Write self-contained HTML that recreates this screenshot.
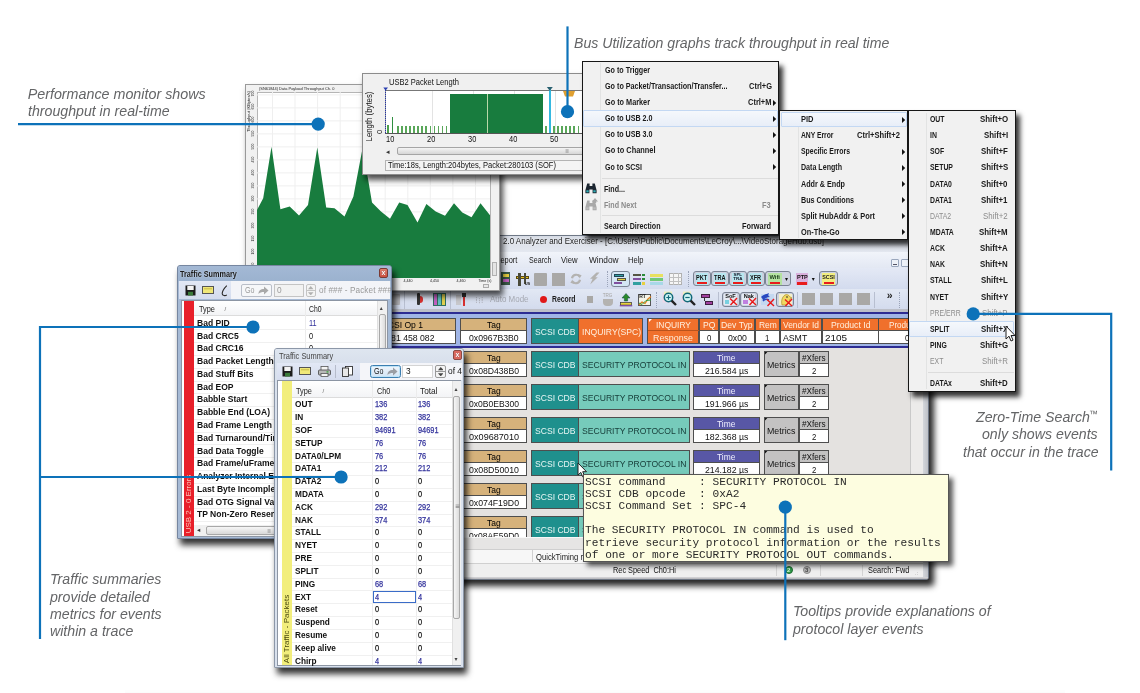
<!DOCTYPE html>
<html lang="en"><head><meta charset="utf-8"><title>USB Protocol Suite</title>
<style>
html,body{margin:0;padding:0}
body{width:1140px;height:693px;background:#fff;position:relative;overflow:hidden;font-family:"Liberation Sans",sans-serif}
div,span.t,svg{position:absolute;box-sizing:border-box}
span.t{white-space:pre;transform-origin:0 50%}
#root{left:0;top:0;width:1140px;height:693px;will-change:transform}
</style></head>
<body>
<div id="root">
<div style="left:125.0px;top:689.0px;width:940.0px;height:4.0px;background:linear-gradient(rgba(0,0,0,0),rgba(0,0,0,.016))"></div>
<div style="left:300.0px;top:235.0px;width:628.5px;height:345.0px;background:#dadee6;border:1px solid #6f7886;border-radius:3px;box-shadow:5px 6px 6px rgba(0,0,0,.85);overflow:hidden">
<div style="left:-1.0px;top:-1.0px;width:628.5px;height:16.5px;background:linear-gradient(#d6dbe4,#e4e8f0)"></div>
<span class="t" style="font:normal normal 8.80px/11px 'Liberation Sans',sans-serif;color:#222;left:201.5px;top:-0.2px;transform:scaleX(0.907);text-shadow:0 0 3px #fff;">2.0 Analyzer and Exerciser - [C:\Users\Public\Documents\LeCroy\...\VideoStorageHub.usb]</span>
<div style="left:5.0px;top:15.5px;width:616.5px;height:16.9px;background:linear-gradient(#f1f4fa,#e3e8f3)"></div>
<span class="t" style="font:normal normal 8.80px/11px 'Liberation Sans',sans-serif;color:#1a1a1a;left:194.1px;top:18.8px;transform:scaleX(0.848);">Report</span>
<span class="t" style="font:normal normal 8.80px/11px 'Liberation Sans',sans-serif;color:#1a1a1a;left:227.6px;top:18.8px;transform:scaleX(0.807);">Search</span>
<span class="t" style="font:normal normal 8.80px/11px 'Liberation Sans',sans-serif;color:#1a1a1a;left:260.0px;top:18.8px;transform:scaleX(0.873);">View</span>
<span class="t" style="font:normal normal 8.80px/11px 'Liberation Sans',sans-serif;color:#1a1a1a;left:287.5px;top:18.8px;transform:scaleX(0.943);">Window</span>
<span class="t" style="font:normal normal 8.80px/11px 'Liberation Sans',sans-serif;color:#1a1a1a;left:327.0px;top:18.8px;transform:scaleX(0.857);">Help</span>
<div style="left:590.0px;top:23.0px;width:8.0px;height:8.0px;background:#eef2f8;border:1px solid #9aa7bd;border-radius:1px"></div>
<div style="left:592.0px;top:28.0px;width:4.0px;height:1.2px;background:#556"></div>
<div style="left:600.0px;top:23.0px;width:8.0px;height:8.0px;background:#eef2f8;border:1px solid #9aa7bd;border-radius:1px"></div>
<div style="left:5.0px;top:32.4px;width:616.5px;height:20.6px;background:linear-gradient(#e4e9f5,#d3dbee)"></div>
<div style="left:5.0px;top:53.0px;width:616.5px;height:22.5px;background:linear-gradient(#e2e8f4,#d1d9ec)"></div>
<div style="left:200.0px;top:36.0px;width:9.0px;height:13.0px;background:#3a5a48"></div>
<div style="left:202.0px;top:38.0px;width:6.0px;height:3.0px;background:#e8d040"></div>
<div style="left:202.0px;top:43.0px;width:6.0px;height:3.0px;background:#c060c0"></div>
<div style="left:214.5px;top:39.5px;width:13.0px;height:3.5px;background:#e8c020;border:1px solid #5a4a10"></div>
<div style="left:216.5px;top:36.5px;width:3.0px;height:13.5px;background:#4a4a3a"></div>
<div style="left:222.5px;top:36.5px;width:2.5px;height:11.5px;background:#4a4a3a"></div>
<span class="t" style="font:normal bold 4.00px/5px 'Liberation Sans',sans-serif;color:#222;left:223.7px;top:45.0px;">US</span>
<div style="left:232.5px;top:37.0px;width:13.5px;height:12.5px;background:#a9a8a6;border-radius:1px"></div>
<div style="left:250.5px;top:37.0px;width:13.0px;height:12.5px;background:#a9a8a6"></div>
<svg style="left:269.0px;top:36.5px" width="12" height="12" viewBox="0 0 12 12"><path d="M2 5.2A4.2 4.2 0 0 1 9.6 3.6M10 6.8A4.2 4.2 0 0 1 2.4 8.4" fill="none" stroke="#b3b2b0" stroke-width="2.2"/><polygon points="8,1 11.6,2.2 9.6,5.4" fill="#b3b2b0"/><polygon points="4,11 0.4,9.8 2.4,6.6" fill="#b3b2b0"/></svg>
<svg style="left:288.0px;top:36.0px" width="11" height="13" viewBox="0 0 11 13"><polygon points="7.5,0.5 10.5,0.5 6.3,5.3 8.8,5.3 1.2,12.5 3.6,6.8 1,6.8" fill="#b3b2b0"/></svg>
<div style="left:305.7px;top:35.0px;width:1.6px;height:16.0px;border-left:1.6px dotted #9aa3b8"></div>
<div style="left:309.5px;top:35.0px;width:19.0px;height:16.0px;background:#d4e6f4;border:1.4px solid #7b8494;border-radius:3px"></div>
<div style="left:313.0px;top:38.0px;width:10.0px;height:2.6px;background:#30a0a0;border:1px solid #245"></div>
<div style="left:316.0px;top:42.0px;width:9.0px;height:2.6px;background:#e8d040;border:1px solid #554"></div>
<div style="left:313.0px;top:46.0px;width:8.0px;height:2.4px;background:#8050a0"></div>
<div style="left:332.0px;top:37.5px;width:8.0px;height:2.8px;background:#e8d040;border:1px solid #554"></div>
<div style="left:341.0px;top:37.5px;width:3.0px;height:2.8px;background:#2a8a3a"></div>
<div style="left:332.0px;top:41.7px;width:8.0px;height:2.8px;background:#8050a0"></div>
<div style="left:341.0px;top:41.7px;width:3.0px;height:2.8px;background:#2a8a3a"></div>
<div style="left:332.0px;top:45.9px;width:8.0px;height:2.8px;background:#30a0a0"></div>
<div style="left:341.0px;top:45.9px;width:3.0px;height:2.8px;background:#e8d040"></div>
<div style="left:349.0px;top:37.5px;width:13.0px;height:3.0px;background:#e8e060"></div>
<div style="left:349.0px;top:41.5px;width:13.0px;height:3.0px;background:#70c878"></div>
<div style="left:349.0px;top:45.5px;width:13.0px;height:3.0px;background:#a8d8e8"></div>
<div style="left:368.0px;top:37.0px;width:13.0px;height:12.0px;background:#f6f6f6;border:1px solid #b0b0b0"></div>
<div style="left:368.0px;top:40.5px;width:13.0px;height:0.8px;background:#c0c0c0"></div>
<div style="left:368.0px;top:44.5px;width:13.0px;height:0.8px;background:#c0c0c0"></div>
<div style="left:372.0px;top:37.0px;width:0.8px;height:12.0px;background:#c0c0c0"></div>
<div style="left:376.5px;top:37.0px;width:0.8px;height:12.0px;background:#c0c0c0"></div>
<div style="left:387.0px;top:35.0px;width:1.6px;height:16.0px;border-left:1.6px dotted #9aa3b8"></div>
<div style="left:392.0px;top:35.2px;width:17.7px;height:15.2px;background:#cdd2e0;border:1.4px solid #7b8494;border-radius:3px"></div>
<div style="left:394.5px;top:37.2px;width:12.7px;height:11.6px;background:#b7e6ef"></div>
<span class="t" style="font:normal bold 6.80px/9px 'Liberation Sans',sans-serif;color:#111;left:395.3px;top:36.9px;transform:scaleX(0.820);">PKT</span>
<div style="left:396.0px;top:45.8px;width:9.7px;height:2.4px;background:#e81c1c"></div>
<div style="left:410.1px;top:35.2px;width:17.5px;height:15.2px;background:#cdd2e0;border:1.4px solid #7b8494;border-radius:3px"></div>
<div style="left:412.6px;top:37.2px;width:12.5px;height:11.6px;background:#b7e6ef"></div>
<span class="t" style="font:normal bold 6.80px/9px 'Liberation Sans',sans-serif;color:#111;left:413.1px;top:36.9px;transform:scaleX(0.820);">TRA</span>
<div style="left:414.1px;top:45.8px;width:9.5px;height:2.4px;background:#e81c1c"></div>
<div style="left:428.0px;top:35.2px;width:17.5px;height:15.2px;background:#cdd2e0;border:1.4px solid #7b8494;border-radius:3px"></div>
<div style="left:430.5px;top:37.2px;width:12.5px;height:11.6px;background:#b7e6ef"></div>
<div style="left:432.0px;top:45.8px;width:9.5px;height:2.4px;background:#e81c1c"></div>
<div style="left:445.9px;top:35.2px;width:18.0px;height:15.2px;background:#cdd2e0;border:1.4px solid #7b8494;border-radius:3px"></div>
<div style="left:448.4px;top:37.2px;width:13.0px;height:11.6px;background:#b7e6ef"></div>
<span class="t" style="font:normal bold 6.80px/9px 'Liberation Sans',sans-serif;color:#111;left:449.3px;top:36.9px;transform:scaleX(0.820);">XFR</span>
<div style="left:449.9px;top:45.8px;width:10.0px;height:2.4px;background:#e81c1c"></div>
<span class="t" style="font:normal bold 4.40px/6px 'Liberation Sans',sans-serif;color:#112;left:432.5px;top:36.2px;">SPL</span>
<span class="t" style="font:normal bold 4.40px/6px 'Liberation Sans',sans-serif;color:#112;left:432.3px;top:40.2px;">TRA</span>
<div style="left:464.3px;top:35.2px;width:26.0px;height:15.2px;background:#cdd2e0;border:1.4px solid #7b8494;border-radius:3px"></div>
<div style="left:467.0px;top:37.2px;width:13.5px;height:11.6px;background:#b4e2a0"></div>
<span class="t" style="font:normal bold 5.80px/8px 'Liberation Sans',sans-serif;color:#1a3a1a;left:468.4px;top:37.0px;">Wifi</span>
<div style="left:468.5px;top:45.8px;width:10.5px;height:2.4px;background:#e81c1c"></div>
<span class="t" style="font:normal normal 6.00px/8px 'Liberation Sans',sans-serif;color:#111;left:484.0px;top:39.3px;font-family:'DejaVu Sans',sans-serif;">▾</span>
<div style="left:495.3px;top:37.0px;width:12.2px;height:12.3px;background:#d9b0dc"></div>
<span class="t" style="font:normal bold 6.20px/8px 'Liberation Sans',sans-serif;color:#111;left:496.0px;top:37.3px;transform:scaleX(0.900);">PTP</span>
<div style="left:496.3px;top:45.5px;width:10.2px;height:3.0px;background:#e81c1c"></div>
<span class="t" style="font:normal normal 6.00px/8px 'Liberation Sans',sans-serif;color:#111;left:510.8px;top:39.3px;font-family:'DejaVu Sans',sans-serif;">▾</span>
<div style="left:518.4px;top:35.2px;width:18.2px;height:15.2px;background:#cdd2e0;border:1.4px solid #7b8494;border-radius:3px"></div>
<div style="left:521.0px;top:37.2px;width:13.0px;height:11.6px;background:#f2ee80"></div>
<span class="t" style="font:normal bold 5.40px/7px 'Liberation Sans',sans-serif;color:#222;left:521.2px;top:37.8px;">SCSI</span>
<div style="left:522.5px;top:45.8px;width:10.0px;height:2.4px;background:#e81c1c"></div>
<div style="left:103.0px;top:54.5px;width:1.0px;height:18.5px;background:#b8bfd0"></div>
<div style="left:91.0px;top:58.0px;width:8.0px;height:11.0px;background:#b9b9bd;border-radius:1px"></div>
<div style="left:116.2px;top:57.0px;width:2.8px;height:12.0px;background:#333;border-radius:1px"></div>
<div style="left:119.0px;top:60.0px;width:2.5px;height:7.0px;background:#d83030;border-radius:0 3px 3px 0"></div>
<div style="left:131.5px;top:56.5px;width:13.0px;height:13.5px;background:#2f6f60"></div>
<div style="left:133.0px;top:58.0px;width:3.0px;height:11.0px;background:#c060c0"></div>
<div style="left:137.0px;top:58.0px;width:3.0px;height:11.0px;background:#60c0c0"></div>
<div style="left:141.0px;top:58.0px;width:2.5px;height:11.0px;background:#e0d050"></div>
<div style="left:149.0px;top:54.5px;width:1.0px;height:18.5px;background:#b8bfd0"></div>
<div style="left:155.0px;top:59.0px;width:5.0px;height:10.0px;background:#c8c8cc"></div>
<div style="left:161.0px;top:57.0px;width:4.0px;height:4.0px;background:#333"></div>
<div style="left:162.2px;top:61.0px;width:1.6px;height:9.0px;background:#d83030"></div>
<span class="t" style="font:normal normal 9.00px/12px 'Liberation Sans',sans-serif;color:#b4b7c0;left:174.1px;top:57.5px;font-family:'DejaVu Sans',sans-serif;">⁞⁝⁞</span>
<span class="t" style="font:normal normal 8.80px/11px 'Liberation Sans',sans-serif;color:#a6a9b2;left:189.0px;top:57.9px;transform:scaleX(0.905);">Auto Mode</span>
<div style="left:238.7px;top:59.8px;width:7.2px;height:7.2px;background:#e01818;border-radius:50%"></div>
<span class="t" style="font:normal bold 8.80px/11px 'Liberation Sans',sans-serif;color:#1a1a1a;left:250.5px;top:58.0px;transform:scaleX(0.775);">Record</span>
<div style="left:285.5px;top:60.0px;width:6.5px;height:6.5px;background:#a9a8a6"></div>
<span class="t" style="font:normal normal 4.60px/6px 'Liberation Sans',sans-serif;color:#a6a5a3;left:301.7px;top:57.0px;">TRG</span>
<div style="left:301.5px;top:63.0px;width:10.0px;height:6.5px;background:#b4b3b1;border-radius:0 0 4px 4px"></div>
<svg style="left:318.0px;top:56.5px" width="14" height="14" viewBox="0 0 14 14"><polygon points="7,0.5 11,5 8.6,5 8.6,8 5.4,8 5.4,5 3,5" fill="#2a8a2a" stroke="#144" stroke-width=".5"/><rect x="1.5" y="9.5" width="11" height="2.6" fill="#e8d040" stroke="#333" stroke-width=".7"/><rect x="0.8" y="12" width="12.4" height="1.4" fill="#8050a0"/></svg>
<div style="left:336.5px;top:57.5px;width:13.5px;height:12.5px;background:#f4f4e8;border:1px solid #555"></div>
<span class="t" style="font:normal bold 5.00px/6px 'Liberation Sans',sans-serif;color:#222;left:338.2px;top:57.3px;">RT</span>
<svg style="left:336.5px;top:57.5px" width="14" height="13" viewBox="0 0 14 13"><polyline points="1,11 4,8 7,9.5 10,5 13,2.5" fill="none" stroke="#e08020" stroke-width="1.3"/><polyline points="1,9 4,10.5 8,6.5 13,6" fill="none" stroke="#30a040" stroke-width="1"/></svg>
<div style="left:354.5px;top:55.5px;width:1.6px;height:16.5px;border-left:1.6px dotted #9aa3b8"></div>
<svg style="left:361.2px;top:55.3px" width="16" height="16" viewBox="0 0 16 16"><rect x="0.5" y="1.5" width="8" height="10" fill="#f0d8e8"/><rect x="2" y="0.5" width="8" height="6" fill="#f0f0c0"/><circle cx="6.5" cy="6.5" r="4.2" fill="#d0f4f4" stroke="#106878" stroke-width="1.5"/><path d="M9.6 9.6L14 14" stroke="#222" stroke-width="2.4"/><path d="M4.3 6.5h4.4M6.5 4.3v4.4" stroke="#106878" stroke-width="1.2"/></svg>
<svg style="left:379.5px;top:55.3px" width="16" height="16" viewBox="0 0 16 16"><rect x="0.5" y="1.5" width="8" height="10" fill="#f0d8e8"/><rect x="2" y="0.5" width="8" height="6" fill="#f0f0c0"/><circle cx="6.5" cy="6.5" r="4.2" fill="#d0f4f4" stroke="#106878" stroke-width="1.5"/><path d="M9.6 9.6L14 14" stroke="#222" stroke-width="2.4"/><path d="M4.3 6.5h4.4" stroke="#106878" stroke-width="1.2"/></svg>
<div style="left:399.5px;top:58.0px;width:9.0px;height:3.5px;background:#a040a0;border:1px solid #402040"></div>
<div style="left:403.5px;top:65.0px;width:8.5px;height:3.5px;background:#a040a0;border:1px solid #402040"></div>
<div style="left:403.3px;top:61.5px;width:1.2px;height:3.5px;background:#333"></div>
<div style="left:416.5px;top:55.5px;width:1.0px;height:16.5px;background:#b8bfd0"></div>
<div style="left:420.5px;top:55.6px;width:18.0px;height:15.6px;background:#cdd2e0;border:1.4px solid #7b8494;border-radius:3px"></div>
<div style="left:423.0px;top:57.6px;width:13.0px;height:11.6px;background:#e4eaf2"></div>
<span class="t" style="font:normal bold 5.60px/7px 'Liberation Sans',sans-serif;color:#111;left:424.2px;top:57.0px;">SoF</span>
<div style="left:423.5px;top:63.5px;width:4.5px;height:4.5px;background:#78d0e0"></div>
<svg style="left:428.0px;top:61.3px" width="9" height="9" viewBox="0 0 9 9"><path d="M1 1.5L8 8M8 1L1.5 8" stroke="#e81818" stroke-width="1.4" fill="none"/></svg>
<div style="left:438.9px;top:55.6px;width:17.7px;height:15.6px;background:#cdd2e0;border:1.4px solid #7b8494;border-radius:3px"></div>
<div style="left:441.4px;top:57.6px;width:12.8px;height:11.6px;background:#e4eaf2"></div>
<span class="t" style="font:normal bold 5.60px/7px 'Liberation Sans',sans-serif;color:#111;left:442.7px;top:57.0px;">Nak</span>
<div style="left:442.0px;top:63.5px;width:4.5px;height:4.5px;background:#c080e0"></div>
<svg style="left:446.5px;top:61.3px" width="9" height="9" viewBox="0 0 9 9"><path d="M1 1.5L8 8M8 1L1.5 8" stroke="#e81818" stroke-width="1.4" fill="none"/></svg>
<div style="left:459.5px;top:57.6px;width:13.0px;height:11.6px;background:#c4d8f0"></div>
<svg style="left:458.5px;top:56.0px" width="16" height="14" viewBox="0 0 16 14"><path d="M1 5c3-3 6-3 8-4-1 2-1 3 1 4-3 0-5 1-7 4 0-2-1-3-2-4z" fill="#2848c0"/><path d="M3 9c2-2 4-2 6-1" stroke="#2848c0" stroke-width="1.5" fill="none"/></svg>
<svg style="left:465.0px;top:61.5px" width="9" height="9" viewBox="0 0 9 9"><path d="M1 1.5L8 8M8 1L1.5 8" stroke="#e81818" stroke-width="1.4" fill="none"/></svg>
<div style="left:475.4px;top:55.6px;width:17.8px;height:15.6px;background:#cdd2e0;border:1.4px solid #7b8494;border-radius:3px"></div>
<div style="left:478.0px;top:57.6px;width:12.6px;height:11.6px;background:#f4f0c8"></div>
<svg style="left:477.5px;top:57.0px" width="14" height="13" viewBox="0 0 14 13"><path d="M3 12c-1-4 0-8 3-10 2-1 4 0 5 2l2 1-2 1c0 3-2 5-4 6z" fill="#f0d860" stroke="#a08020" stroke-width=".6"/><circle cx="8" cy="4" r=".8" fill="#222"/></svg>
<svg style="left:482.5px;top:61.8px" width="9" height="9" viewBox="0 0 9 9"><path d="M1 1.5L8 8M8 1L1.5 8" stroke="#e81818" stroke-width="1.4" fill="none"/></svg>
<div style="left:496.3px;top:55.5px;width:1.0px;height:16.5px;background:#b8bfd0"></div>
<div style="left:501.0px;top:57.0px;width:12.8px;height:12.0px;background:#a9a8a6"></div>
<div style="left:519.4px;top:57.0px;width:12.8px;height:12.0px;background:#a9a8a6"></div>
<div style="left:538.0px;top:57.0px;width:12.8px;height:12.0px;background:#a9a8a6"></div>
<div style="left:556.3px;top:57.0px;width:12.8px;height:12.0px;background:#a9a8a6"></div>
<div style="left:572.5px;top:55.5px;width:1.0px;height:16.5px;background:#b8bfd0"></div>
<span class="t" style="font:normal bold 10.50px/14px 'Liberation Sans',sans-serif;color:#222;left:585.8px;top:51.5px;">»</span>
<div style="left:598.0px;top:55.5px;width:1.6px;height:16.5px;border-left:1.6px dotted #9aa3b8"></div>
<div style="left:5.0px;top:73.3px;width:616.5px;height:2.7px;background:#bcbfc8"></div>
<div style="left:5.0px;top:75.5px;width:603.5px;height:225.5px;background:#e4e2e0"></div>
<div style="left:608.5px;top:75.5px;width:13.0px;height:237.5px;background:#ecebea;border-left:1px solid #c9c9c9"></div>
<div style="left:5.0px;top:75.5px;width:603.5px;height:2.0px;background:#2d2c93"></div>
<div style="left:5.0px;top:77.5px;width:603.5px;height:32.5px;background:#a0b5e6"></div>
<div style="left:5.0px;top:110.0px;width:603.5px;height:2.0px;background:#2d2c93"></div>
<div style="left:51.7px;top:81.7px;width:103.6px;height:13.5px;background:#d6b27b;border:1px solid #4e4e4e;"></div>
<div style="left:51.7px;top:94.2px;width:103.6px;height:13.5px;background:#fff;border:1px solid #4e4e4e;"></div>
<span class="t" style="font:normal normal 9.50px/12px 'Liberation Sans',sans-serif;color:#000;left:81.0px;top:83.0px;transform:scaleX(0.903);">SCSI Op 1</span>
<span class="t" style="font:normal normal 9.50px/12px 'Liberation Sans',sans-serif;color:#111;left:78.3px;top:96.0px;transform:scaleX(0.914);">0.481 458 082</span>
<div style="left:159.0px;top:81.7px;width:67.4px;height:13.5px;background:#d6b27b;border:1px solid #4e4e4e;"></div>
<span class="t" style="font:normal normal 9.50px/12px 'Liberation Sans',sans-serif;color:#000;left:185.8px;top:83.2px;transform:scaleX(0.894);">Tag</span>
<div style="left:159.0px;top:94.2px;width:67.4px;height:13.5px;background:#fff;border:1px solid #4e4e4e;"></div>
<span class="t" style="font:normal normal 9.50px/12px 'Liberation Sans',sans-serif;color:#111;left:167.8px;top:95.8px;transform:scaleX(0.913);">0x0967B3B0</span>
<div style="left:230.3px;top:82.0px;width:47.7px;height:25.7px;background:#1f908d;border:1px solid #4e4e4e;"></div>
<span class="t" style="font:normal normal 9.50px/12px 'Liberation Sans',sans-serif;color:#e8f6f4;left:233.9px;top:89.7px;transform:scaleX(0.903);">SCSI CDB</span>
<div style="left:277.4px;top:82.0px;width:65.1px;height:25.7px;background:#f0702c;border:1px solid #4e4e4e;"></div>
<span class="t" style="font:normal normal 9.50px/12px 'Liberation Sans',sans-serif;color:#fff0e0;left:280.5px;top:89.7px;transform:scaleX(0.904);">INQUIRY(SPC)</span>
<div style="left:346.3px;top:82.0px;width:52.2px;height:25.7px;background:#f0702c;border:1px solid #4e4e4e;"></div>
<div style="left:347.0px;top:94.3px;width:51.0px;height:0.9px;background:#b8521c"></div>
<span class="t" style="font:normal normal 9.50px/12px 'Liberation Sans',sans-serif;color:#fff0e0;left:354.8px;top:83.0px;transform:scaleX(0.888);">INQUIRY</span>
<span class="t" style="font:normal normal 9.50px/12px 'Liberation Sans',sans-serif;color:#fff0e0;left:352.3px;top:95.8px;transform:scaleX(0.935);">Response</span>
<svg style="left:347.6px;top:83.3px" width="4" height="4" viewBox="0 0 4 4"><polygon points="0,0 3,0 0,3" fill="#fff"/></svg>
<div style="left:398.0px;top:81.7px;width:20.2px;height:13.5px;background:#f0702c;border:1px solid #4e4e4e;"></div>
<span class="t" style="font:normal normal 9.50px/12px 'Liberation Sans',sans-serif;color:#fff0e0;left:401.9px;top:83.2px;transform:scaleX(0.903);">PQ</span>
<div style="left:398.0px;top:94.2px;width:20.2px;height:13.5px;background:#fff;border:1px solid #4e4e4e;"></div>
<span class="t" style="font:normal normal 9.50px/12px 'Liberation Sans',sans-serif;color:#111;left:405.9px;top:95.8px;transform:scaleX(0.820);">0</span>
<div style="left:417.7px;top:81.7px;width:36.8px;height:13.5px;background:#f0702c;border:1px solid #4e4e4e;"></div>
<span class="t" style="font:normal normal 9.50px/12px 'Liberation Sans',sans-serif;color:#fff0e0;left:420.3px;top:83.2px;transform:scaleX(0.911);">Dev Typ</span>
<div style="left:417.7px;top:94.2px;width:36.8px;height:13.5px;background:#fff;border:1px solid #4e4e4e;"></div>
<span class="t" style="font:normal normal 9.50px/12px 'Liberation Sans',sans-serif;color:#111;left:426.6px;top:95.8px;transform:scaleX(0.922);">0x00</span>
<div style="left:454.0px;top:81.7px;width:25.0px;height:13.5px;background:#f0702c;border:1px solid #4e4e4e;"></div>
<span class="t" style="font:normal normal 9.50px/12px 'Liberation Sans',sans-serif;color:#fff0e0;left:457.5px;top:83.2px;transform:scaleX(0.892);">Rem</span>
<div style="left:454.0px;top:94.2px;width:25.0px;height:13.5px;background:#fff;border:1px solid #4e4e4e;"></div>
<span class="t" style="font:normal normal 9.50px/12px 'Liberation Sans',sans-serif;color:#111;left:464.3px;top:95.8px;transform:scaleX(0.820);">1</span>
<div style="left:478.5px;top:81.7px;width:42.6px;height:13.5px;background:#f0702c;border:1px solid #4e4e4e;"></div>
<span class="t" style="font:normal normal 9.50px/12px 'Liberation Sans',sans-serif;color:#fff0e0;left:481.8px;top:83.2px;transform:scaleX(0.885);">Vendor Id</span>
<div style="left:478.5px;top:94.2px;width:42.6px;height:13.5px;background:#fff;border:1px solid #4e4e4e;"></div>
<span class="t" style="font:normal normal 9.50px/12px 'Liberation Sans',sans-serif;color:#111;left:481.5px;top:95.8px;transform:scaleX(0.917);">ASMT</span>
<div style="left:520.6px;top:81.7px;width:57.3px;height:13.5px;background:#f0702c;border:1px solid #4e4e4e;"></div>
<span class="t" style="font:normal normal 9.50px/12px 'Liberation Sans',sans-serif;color:#fff0e0;left:529.5px;top:83.2px;transform:scaleX(0.912);">Product Id</span>
<div style="left:520.6px;top:94.2px;width:57.3px;height:13.5px;background:#fff;border:1px solid #4e4e4e;"></div>
<span class="t" style="font:normal normal 9.50px/12px 'Liberation Sans',sans-serif;color:#111;left:523.6px;top:95.8px;transform:scaleX(1.046);">2105</span>
<div style="left:577.4px;top:81.7px;width:56.6px;height:13.5px;background:#f0702c;border:1px solid #4e4e4e;"></div>
<span class="t" style="font:normal normal 9.50px/12px 'Liberation Sans',sans-serif;color:#fff0e0;left:587.7px;top:83.2px;transform:scaleX(0.852);">Product R</span>
<div style="left:577.4px;top:94.2px;width:56.6px;height:13.5px;background:#fff;border:1px solid #4e4e4e;"></div>
<span class="t" style="font:normal normal 9.50px/12px 'Liberation Sans',sans-serif;color:#111;left:603.5px;top:95.8px;transform:scaleX(0.820);">0</span>
<div style="left:159.0px;top:114.7px;width:67.4px;height:13.5px;background:#d6b27b;border:1px solid #4e4e4e;"></div>
<span class="t" style="font:normal normal 9.50px/12px 'Liberation Sans',sans-serif;color:#000;left:185.8px;top:116.2px;transform:scaleX(0.894);">Tag</span>
<div style="left:159.0px;top:127.2px;width:67.4px;height:13.5px;background:#fff;border:1px solid #4e4e4e;"></div>
<span class="t" style="font:normal normal 9.50px/12px 'Liberation Sans',sans-serif;color:#111;left:167.7px;top:128.8px;transform:scaleX(0.910);">0x08D438B0</span>
<div style="left:230.3px;top:115.0px;width:47.7px;height:25.7px;background:#1f908d;border:1px solid #4e4e4e;"></div>
<span class="t" style="font:normal normal 9.50px/12px 'Liberation Sans',sans-serif;color:#e8f6f4;left:233.9px;top:122.7px;transform:scaleX(0.903);">SCSI CDB</span>
<div style="left:277.4px;top:115.0px;width:111.8px;height:25.7px;background:#76cbbb;border:1px solid #4e4e4e;"></div>
<span class="t" style="font:normal normal 9.50px/12px 'Liberation Sans',sans-serif;color:#163c38;left:281.0px;top:122.7px;transform:scaleX(0.905);">SECURITY PROTOCOL IN</span>
<div style="left:392.3px;top:114.7px;width:66.7px;height:13.5px;background:#5857a6;border:1px solid #4e4e4e;"></div>
<span class="t" style="font:normal normal 9.50px/12px 'Liberation Sans',sans-serif;color:#f0f0ff;left:416.4px;top:116.2px;transform:scaleX(0.886);">Time</span>
<div style="left:392.3px;top:127.2px;width:66.7px;height:13.5px;background:#fff;border:1px solid #4e4e4e;"></div>
<span class="t" style="font:normal normal 9.50px/12px 'Liberation Sans',sans-serif;color:#111;left:403.9px;top:128.8px;transform:scaleX(0.919);">216.584 µs</span>
<div style="left:462.7px;top:115.0px;width:35.8px;height:25.7px;background:#c3c2c2;border:1px solid #4e4e4e;"></div>
<span class="t" style="font:normal normal 9.50px/12px 'Liberation Sans',sans-serif;color:#111;left:466.4px;top:122.7px;transform:scaleX(0.928);">Metrics</span>
<svg style="left:463.7px;top:116.0px" width="4" height="4" viewBox="0 0 4 4"><polygon points="0,0 2.4,0 0,2.4" fill="#111"/></svg>
<div style="left:498.0px;top:114.7px;width:30.0px;height:13.5px;background:#c3c2c2;border:1px solid #4e4e4e;"></div>
<span class="t" style="font:normal normal 9.50px/12px 'Liberation Sans',sans-serif;color:#111;left:501.1px;top:116.2px;transform:scaleX(0.863);">#Xfers</span>
<div style="left:498.0px;top:127.2px;width:30.0px;height:13.5px;background:#fff;border:1px solid #4e4e4e;"></div>
<span class="t" style="font:normal normal 9.50px/12px 'Liberation Sans',sans-serif;color:#111;left:510.8px;top:128.8px;transform:scaleX(0.820);">2</span>
<div style="left:159.0px;top:147.7px;width:67.4px;height:13.5px;background:#d6b27b;border:1px solid #4e4e4e;"></div>
<span class="t" style="font:normal normal 9.50px/12px 'Liberation Sans',sans-serif;color:#000;left:185.8px;top:149.2px;transform:scaleX(0.894);">Tag</span>
<div style="left:159.0px;top:160.2px;width:67.4px;height:13.5px;background:#fff;border:1px solid #4e4e4e;"></div>
<span class="t" style="font:normal normal 9.50px/12px 'Liberation Sans',sans-serif;color:#111;left:167.7px;top:161.8px;transform:scaleX(0.902);">0x0B0EB300</span>
<div style="left:230.3px;top:148.0px;width:47.7px;height:25.7px;background:#1f908d;border:1px solid #4e4e4e;"></div>
<span class="t" style="font:normal normal 9.50px/12px 'Liberation Sans',sans-serif;color:#e8f6f4;left:233.9px;top:155.7px;transform:scaleX(0.903);">SCSI CDB</span>
<div style="left:277.4px;top:148.0px;width:111.8px;height:25.7px;background:#76cbbb;border:1px solid #4e4e4e;"></div>
<span class="t" style="font:normal normal 9.50px/12px 'Liberation Sans',sans-serif;color:#163c38;left:281.0px;top:155.7px;transform:scaleX(0.905);">SECURITY PROTOCOL IN</span>
<div style="left:392.3px;top:147.7px;width:66.7px;height:13.5px;background:#5857a6;border:1px solid #4e4e4e;"></div>
<span class="t" style="font:normal normal 9.50px/12px 'Liberation Sans',sans-serif;color:#f0f0ff;left:416.4px;top:149.2px;transform:scaleX(0.886);">Time</span>
<div style="left:392.3px;top:160.2px;width:66.7px;height:13.5px;background:#fff;border:1px solid #4e4e4e;"></div>
<span class="t" style="font:normal normal 9.50px/12px 'Liberation Sans',sans-serif;color:#111;left:403.9px;top:161.8px;transform:scaleX(0.919);">191.966 µs</span>
<div style="left:462.7px;top:148.0px;width:35.8px;height:25.7px;background:#c3c2c2;border:1px solid #4e4e4e;"></div>
<span class="t" style="font:normal normal 9.50px/12px 'Liberation Sans',sans-serif;color:#111;left:466.4px;top:155.7px;transform:scaleX(0.928);">Metrics</span>
<svg style="left:463.7px;top:149.0px" width="4" height="4" viewBox="0 0 4 4"><polygon points="0,0 2.4,0 0,2.4" fill="#111"/></svg>
<div style="left:498.0px;top:147.7px;width:30.0px;height:13.5px;background:#c3c2c2;border:1px solid #4e4e4e;"></div>
<span class="t" style="font:normal normal 9.50px/12px 'Liberation Sans',sans-serif;color:#111;left:501.1px;top:149.2px;transform:scaleX(0.863);">#Xfers</span>
<div style="left:498.0px;top:160.2px;width:30.0px;height:13.5px;background:#fff;border:1px solid #4e4e4e;"></div>
<span class="t" style="font:normal normal 9.50px/12px 'Liberation Sans',sans-serif;color:#111;left:510.8px;top:161.8px;transform:scaleX(0.820);">2</span>
<div style="left:159.0px;top:180.7px;width:67.4px;height:13.5px;background:#d6b27b;border:1px solid #4e4e4e;"></div>
<span class="t" style="font:normal normal 9.50px/12px 'Liberation Sans',sans-serif;color:#000;left:185.8px;top:182.2px;transform:scaleX(0.894);">Tag</span>
<div style="left:159.0px;top:193.2px;width:67.4px;height:13.5px;background:#fff;border:1px solid #4e4e4e;"></div>
<span class="t" style="font:normal normal 9.50px/12px 'Liberation Sans',sans-serif;color:#111;left:167.7px;top:194.8px;transform:scaleX(0.956);">0x09687010</span>
<div style="left:230.3px;top:181.0px;width:47.7px;height:25.7px;background:#1f908d;border:1px solid #4e4e4e;"></div>
<span class="t" style="font:normal normal 9.50px/12px 'Liberation Sans',sans-serif;color:#e8f6f4;left:233.9px;top:188.7px;transform:scaleX(0.903);">SCSI CDB</span>
<div style="left:277.4px;top:181.0px;width:111.8px;height:25.7px;background:#76cbbb;border:1px solid #4e4e4e;"></div>
<span class="t" style="font:normal normal 9.50px/12px 'Liberation Sans',sans-serif;color:#163c38;left:281.0px;top:188.7px;transform:scaleX(0.905);">SECURITY PROTOCOL IN</span>
<div style="left:392.3px;top:180.7px;width:66.7px;height:13.5px;background:#5857a6;border:1px solid #4e4e4e;"></div>
<span class="t" style="font:normal normal 9.50px/12px 'Liberation Sans',sans-serif;color:#f0f0ff;left:416.4px;top:182.2px;transform:scaleX(0.886);">Time</span>
<div style="left:392.3px;top:193.2px;width:66.7px;height:13.5px;background:#fff;border:1px solid #4e4e4e;"></div>
<span class="t" style="font:normal normal 9.50px/12px 'Liberation Sans',sans-serif;color:#111;left:403.9px;top:194.8px;transform:scaleX(0.919);">182.368 µs</span>
<div style="left:462.7px;top:181.0px;width:35.8px;height:25.7px;background:#c3c2c2;border:1px solid #4e4e4e;"></div>
<span class="t" style="font:normal normal 9.50px/12px 'Liberation Sans',sans-serif;color:#111;left:466.4px;top:188.7px;transform:scaleX(0.928);">Metrics</span>
<svg style="left:463.7px;top:182.0px" width="4" height="4" viewBox="0 0 4 4"><polygon points="0,0 2.4,0 0,2.4" fill="#111"/></svg>
<div style="left:498.0px;top:180.7px;width:30.0px;height:13.5px;background:#c3c2c2;border:1px solid #4e4e4e;"></div>
<span class="t" style="font:normal normal 9.50px/12px 'Liberation Sans',sans-serif;color:#111;left:501.1px;top:182.2px;transform:scaleX(0.863);">#Xfers</span>
<div style="left:498.0px;top:193.2px;width:30.0px;height:13.5px;background:#fff;border:1px solid #4e4e4e;"></div>
<span class="t" style="font:normal normal 9.50px/12px 'Liberation Sans',sans-serif;color:#111;left:510.8px;top:194.8px;transform:scaleX(0.820);">2</span>
<div style="left:159.0px;top:213.7px;width:67.4px;height:13.5px;background:#d6b27b;border:1px solid #4e4e4e;"></div>
<span class="t" style="font:normal normal 9.50px/12px 'Liberation Sans',sans-serif;color:#000;left:185.8px;top:215.2px;transform:scaleX(0.894);">Tag</span>
<div style="left:159.0px;top:226.2px;width:67.4px;height:13.5px;background:#fff;border:1px solid #4e4e4e;"></div>
<span class="t" style="font:normal normal 9.50px/12px 'Liberation Sans',sans-serif;color:#111;left:167.7px;top:227.8px;transform:scaleX(0.928);">0x08D50010</span>
<div style="left:230.3px;top:214.0px;width:47.7px;height:25.7px;background:#1f908d;border:1px solid #4e4e4e;"></div>
<span class="t" style="font:normal normal 9.50px/12px 'Liberation Sans',sans-serif;color:#e8f6f4;left:233.9px;top:221.7px;transform:scaleX(0.903);">SCSI CDB</span>
<div style="left:277.4px;top:214.0px;width:111.8px;height:25.7px;background:#76cbbb;border:1px solid #4e4e4e;"></div>
<span class="t" style="font:normal normal 9.50px/12px 'Liberation Sans',sans-serif;color:#163c38;left:281.0px;top:221.7px;transform:scaleX(0.905);">SECURITY PROTOCOL IN</span>
<div style="left:392.3px;top:213.7px;width:66.7px;height:13.5px;background:#5857a6;border:1px solid #4e4e4e;"></div>
<span class="t" style="font:normal normal 9.50px/12px 'Liberation Sans',sans-serif;color:#f0f0ff;left:416.4px;top:215.2px;transform:scaleX(0.886);">Time</span>
<div style="left:392.3px;top:226.2px;width:66.7px;height:13.5px;background:#fff;border:1px solid #4e4e4e;"></div>
<span class="t" style="font:normal normal 9.50px/12px 'Liberation Sans',sans-serif;color:#111;left:403.9px;top:227.8px;transform:scaleX(0.919);">214.182 µs</span>
<div style="left:462.7px;top:214.0px;width:35.8px;height:25.7px;background:#c3c2c2;border:1px solid #4e4e4e;"></div>
<span class="t" style="font:normal normal 9.50px/12px 'Liberation Sans',sans-serif;color:#111;left:466.4px;top:221.7px;transform:scaleX(0.928);">Metrics</span>
<svg style="left:463.7px;top:215.0px" width="4" height="4" viewBox="0 0 4 4"><polygon points="0,0 2.4,0 0,2.4" fill="#111"/></svg>
<div style="left:498.0px;top:213.7px;width:30.0px;height:13.5px;background:#c3c2c2;border:1px solid #4e4e4e;"></div>
<span class="t" style="font:normal normal 9.50px/12px 'Liberation Sans',sans-serif;color:#111;left:501.1px;top:215.2px;transform:scaleX(0.863);">#Xfers</span>
<div style="left:498.0px;top:226.2px;width:30.0px;height:13.5px;background:#fff;border:1px solid #4e4e4e;"></div>
<span class="t" style="font:normal normal 9.50px/12px 'Liberation Sans',sans-serif;color:#111;left:510.8px;top:227.8px;transform:scaleX(0.820);">2</span>
<div style="left:159.0px;top:246.7px;width:67.4px;height:13.5px;background:#d6b27b;border:1px solid #4e4e4e;"></div>
<span class="t" style="font:normal normal 9.50px/12px 'Liberation Sans',sans-serif;color:#000;left:185.8px;top:248.2px;transform:scaleX(0.894);">Tag</span>
<div style="left:159.0px;top:259.2px;width:67.4px;height:13.5px;background:#fff;border:1px solid #4e4e4e;"></div>
<span class="t" style="font:normal normal 9.50px/12px 'Liberation Sans',sans-serif;color:#111;left:167.7px;top:260.8px;transform:scaleX(0.919);">0x074F19D0</span>
<div style="left:230.3px;top:247.0px;width:47.7px;height:25.7px;background:#1f908d;border:1px solid #4e4e4e;"></div>
<span class="t" style="font:normal normal 9.50px/12px 'Liberation Sans',sans-serif;color:#e8f6f4;left:233.9px;top:254.7px;transform:scaleX(0.903);">SCSI CDB</span>
<div style="left:277.4px;top:247.0px;width:111.8px;height:25.7px;background:#76cbbb;border:1px solid #4e4e4e;"></div>
<span class="t" style="font:normal normal 9.50px/12px 'Liberation Sans',sans-serif;color:#163c38;left:281.0px;top:254.7px;transform:scaleX(0.905);">SECURITY PROTOCOL IN</span>
<div style="left:392.3px;top:246.7px;width:66.7px;height:13.5px;background:#5857a6;border:1px solid #4e4e4e;"></div>
<span class="t" style="font:normal normal 9.50px/12px 'Liberation Sans',sans-serif;color:#f0f0ff;left:416.4px;top:248.2px;transform:scaleX(0.886);">Time</span>
<div style="left:392.3px;top:259.2px;width:66.7px;height:13.5px;background:#fff;border:1px solid #4e4e4e;"></div>
<span class="t" style="font:normal normal 9.50px/12px 'Liberation Sans',sans-serif;color:#111;left:403.9px;top:260.8px;transform:scaleX(0.919);">201.345 µs</span>
<div style="left:462.7px;top:247.0px;width:35.8px;height:25.7px;background:#c3c2c2;border:1px solid #4e4e4e;"></div>
<span class="t" style="font:normal normal 9.50px/12px 'Liberation Sans',sans-serif;color:#111;left:466.4px;top:254.7px;transform:scaleX(0.928);">Metrics</span>
<svg style="left:463.7px;top:248.0px" width="4" height="4" viewBox="0 0 4 4"><polygon points="0,0 2.4,0 0,2.4" fill="#111"/></svg>
<div style="left:498.0px;top:246.7px;width:30.0px;height:13.5px;background:#c3c2c2;border:1px solid #4e4e4e;"></div>
<span class="t" style="font:normal normal 9.50px/12px 'Liberation Sans',sans-serif;color:#111;left:501.1px;top:248.2px;transform:scaleX(0.863);">#Xfers</span>
<div style="left:498.0px;top:259.2px;width:30.0px;height:13.5px;background:#fff;border:1px solid #4e4e4e;"></div>
<span class="t" style="font:normal normal 9.50px/12px 'Liberation Sans',sans-serif;color:#111;left:510.8px;top:260.8px;transform:scaleX(0.820);">2</span>
<div style="left:159.0px;top:279.7px;width:67.4px;height:13.5px;background:#d6b27b;border:1px solid #4e4e4e;"></div>
<span class="t" style="font:normal normal 9.50px/12px 'Liberation Sans',sans-serif;color:#000;left:185.8px;top:281.2px;transform:scaleX(0.894);">Tag</span>
<div style="left:159.0px;top:292.2px;width:67.4px;height:13.5px;background:#fff;border:1px solid #4e4e4e;"></div>
<span class="t" style="font:normal normal 9.50px/12px 'Liberation Sans',sans-serif;color:#111;left:167.7px;top:293.8px;transform:scaleX(0.893);">0x08AE59D0</span>
<div style="left:230.3px;top:280.0px;width:47.7px;height:25.7px;background:#1f908d;border:1px solid #4e4e4e;"></div>
<span class="t" style="font:normal normal 9.50px/12px 'Liberation Sans',sans-serif;color:#e8f6f4;left:233.9px;top:287.6px;transform:scaleX(0.903);">SCSI CDB</span>
<div style="left:277.4px;top:280.0px;width:111.8px;height:25.7px;background:#76cbbb;border:1px solid #4e4e4e;"></div>
<span class="t" style="font:normal normal 9.50px/12px 'Liberation Sans',sans-serif;color:#163c38;left:281.0px;top:287.6px;transform:scaleX(0.905);">SECURITY PROTOCOL IN</span>
<div style="left:392.3px;top:279.7px;width:66.7px;height:13.5px;background:#5857a6;border:1px solid #4e4e4e;"></div>
<span class="t" style="font:normal normal 9.50px/12px 'Liberation Sans',sans-serif;color:#f0f0ff;left:416.4px;top:281.2px;transform:scaleX(0.886);">Time</span>
<div style="left:392.3px;top:292.2px;width:66.7px;height:13.5px;background:#fff;border:1px solid #4e4e4e;"></div>
<span class="t" style="font:normal normal 9.50px/12px 'Liberation Sans',sans-serif;color:#111;left:403.9px;top:293.8px;transform:scaleX(0.919);">198.220 µs</span>
<div style="left:462.7px;top:280.0px;width:35.8px;height:25.7px;background:#c3c2c2;border:1px solid #4e4e4e;"></div>
<span class="t" style="font:normal normal 9.50px/12px 'Liberation Sans',sans-serif;color:#111;left:466.4px;top:287.6px;transform:scaleX(0.928);">Metrics</span>
<svg style="left:463.7px;top:281.0px" width="4" height="4" viewBox="0 0 4 4"><polygon points="0,0 2.4,0 0,2.4" fill="#111"/></svg>
<div style="left:498.0px;top:279.7px;width:30.0px;height:13.5px;background:#c3c2c2;border:1px solid #4e4e4e;"></div>
<span class="t" style="font:normal normal 9.50px/12px 'Liberation Sans',sans-serif;color:#111;left:501.1px;top:281.2px;transform:scaleX(0.863);">#Xfers</span>
<div style="left:498.0px;top:292.2px;width:30.0px;height:13.5px;background:#fff;border:1px solid #4e4e4e;"></div>
<span class="t" style="font:normal normal 9.50px/12px 'Liberation Sans',sans-serif;color:#111;left:510.8px;top:293.8px;transform:scaleX(0.820);">2</span>
<div style="left:622.0px;top:144.0px;width:6.0px;height:201.0px;background:linear-gradient(90deg,#d4d7dc,#b9bcc2)"></div>
<div style="left:5.0px;top:301.0px;width:603.5px;height:12.0px;background:#e6e5e4;border-top:1px solid #f8f8f8"></div>
<div style="left:5.0px;top:313.0px;width:616.5px;height:13.5px;background:#f7f7f7;border-top:1px solid #cfcfcf"></div>
<div style="left:230.5px;top:314.0px;width:1.0px;height:12.0px;background:#d0d0d0"></div>
<span class="t" style="font:normal normal 8.30px/11px 'Liberation Sans',sans-serif;color:#222;left:234.8px;top:315.7px;transform:scaleX(0.924);">QuickTiming r</span>
<div style="left:5.0px;top:326.5px;width:616.5px;height:14.0px;background:#efefef;border-top:1px solid #d0d0d0"></div>
<div style="left:-1.0px;top:341.0px;width:628.5px;height:3.0px;background:linear-gradient(#d9d9dc,#a2a2a6)"></div>
<span class="t" style="font:normal normal 8.20px/11px 'Liberation Sans',sans-serif;color:#111;left:312.3px;top:329.0px;transform:scaleX(0.897);">Rec Speed  Ch0:Hi</span>
<div style="left:474.5px;top:328.5px;width:1.0px;height:11.0px;background:#d4d4d4"></div>
<div style="left:519.0px;top:328.5px;width:1.0px;height:11.0px;background:#d4d4d4"></div>
<div style="left:561.0px;top:328.5px;width:1.0px;height:11.0px;background:#d4d4d4"></div>
<div style="left:483.5px;top:330.0px;width:8.0px;height:8.0px;background:#2e9a48;border-radius:50%;border:1px solid #1d6b2f"></div>
<span class="t" style="font:normal bold 6.00px/8px 'Liberation Sans',sans-serif;color:#dfffe0;left:485.9px;top:330.2px;">2</span>
<div style="left:501.5px;top:330.0px;width:8.0px;height:8.0px;background:#b9b9b9;border-radius:50%;border:1px solid #8a8a8a"></div>
<span class="t" style="font:normal bold 6.00px/8px 'Liberation Sans',sans-serif;color:#444;left:503.9px;top:330.2px;">3</span>
<span class="t" style="font:normal normal 8.20px/11px 'Liberation Sans',sans-serif;color:#111;left:567.0px;top:329.0px;transform:scaleX(0.901);">Search: Fwd</span>
<span class="t" style="font:normal normal 6.00px/8px 'Liberation Sans',sans-serif;color:#999;left:613.8px;top:332.5px;">.:</span>
</div>
<svg style="left:576.5px;top:462px" width="12" height="18" viewBox="0 0 12 18"><path d="M1 1v12l2.8-2.6 1.9 4.4 1.9-.8-1.9-4.3h3.8z" fill="#fff" stroke="#222" stroke-width="1"/></svg>
<div style="left:245.0px;top:84.0px;width:255.0px;height:207.0px;background:#f1f1f1;border:1px solid #9a9a9a;box-shadow:3px 5px 6px rgba(0,0,0,.7);overflow:hidden">
<div style="left:11.0px;top:6.5px;width:233.5px;height:186.0px;background:#fff;border:1px solid #b5b5b5"></div>
<svg style="left:11.0px;top:6.5px" width="233.5" height="186" viewBox="0 0 233.5 186"><g stroke="#efefef" stroke-width="1"><line x1="15.5" y1="0" x2="15.5" y2="186" /><line x1="38.0" y1="0" x2="38.0" y2="186" /><line x1="60.6" y1="0" x2="60.6" y2="186" /><line x1="83.2" y1="0" x2="83.2" y2="186" /><line x1="105.7" y1="0" x2="105.7" y2="186" /><line x1="128.2" y1="0" x2="128.2" y2="186" /><line x1="150.8" y1="0" x2="150.8" y2="186" /><line x1="173.3" y1="0" x2="173.3" y2="186" /><line x1="195.9" y1="0" x2="195.9" y2="186" /><line x1="218.5" y1="0" x2="218.5" y2="186" /><line x1="241.0" y1="0" x2="241.0" y2="186" /><line x1="0" y1="2.9" x2="233" y2="2.9" /><line x1="0" y1="15.9" x2="233" y2="15.9" /><line x1="0" y1="28.9" x2="233" y2="28.9" /><line x1="0" y1="41.9" x2="233" y2="41.9" /><line x1="0" y1="54.9" x2="233" y2="54.9" /><line x1="0" y1="67.9" x2="233" y2="67.9" /><line x1="0" y1="80.9" x2="233" y2="80.9" /><line x1="0" y1="93.9" x2="233" y2="93.9" /><line x1="0" y1="106.9" x2="233" y2="106.9" /><line x1="0" y1="119.9" x2="233" y2="119.9" /><line x1="0" y1="132.9" x2="233" y2="132.9" /><line x1="0" y1="145.9" x2="233" y2="145.9" /><line x1="0" y1="158.9" x2="233" y2="158.9" /><line x1="0" y1="171.9" x2="233" y2="171.9" /><line x1="0" y1="184.9" x2="233" y2="184.9" /></g><polygon points="0.0,117.9 6.2,106.2 14.5,54.8 23.4,117.2 32.7,114.5 42.0,123.5 51.0,112.9 60.3,55.5 69.2,115.5 77.5,116.2 87.5,124.5 96.4,104.5 105.7,55.5 115.0,110.5 124.0,119.5 133.0,126.8 142.2,110.5 150.5,112.9 160.5,130.5 169.4,111.9 178.7,119.5 188.0,123.8 197.0,111.2 205.3,120.5 214.5,125.2 223.5,111.2 233.0,123.2 233.0,186.0 0.0,186.0" fill="#187c3e"/></svg>
<span class="t" style="font:normal normal 4.20px/5px 'Liberation Sans',sans-serif;color:#222;left:12.5px;top:1.1px;transform:scaleX(0.939);">(SN61844) Data Payload Throughput Ch. 0</span>
<span class="t" style="font:normal normal 3.50px/5px 'Liberation Sans',sans-serif;color:#222;left:5.3px;top:6.1px;transform:rotate(-90deg);transform-origin:50% 50%;">700</span>
<span class="t" style="font:normal normal 3.50px/5px 'Liberation Sans',sans-serif;color:#222;left:5.3px;top:19.2px;transform:rotate(-90deg);transform-origin:50% 50%;">650</span>
<span class="t" style="font:normal normal 3.50px/5px 'Liberation Sans',sans-serif;color:#222;left:5.3px;top:32.4px;transform:rotate(-90deg);transform-origin:50% 50%;">600</span>
<span class="t" style="font:normal normal 3.50px/5px 'Liberation Sans',sans-serif;color:#222;left:5.3px;top:45.6px;transform:rotate(-90deg);transform-origin:50% 50%;">550</span>
<span class="t" style="font:normal normal 3.50px/5px 'Liberation Sans',sans-serif;color:#222;left:5.3px;top:58.7px;transform:rotate(-90deg);transform-origin:50% 50%;">500</span>
<span class="t" style="font:normal normal 3.50px/5px 'Liberation Sans',sans-serif;color:#222;left:5.3px;top:71.8px;transform:rotate(-90deg);transform-origin:50% 50%;">450</span>
<span class="t" style="font:normal normal 3.50px/5px 'Liberation Sans',sans-serif;color:#222;left:5.3px;top:85.0px;transform:rotate(-90deg);transform-origin:50% 50%;">400</span>
<span class="t" style="font:normal normal 3.50px/5px 'Liberation Sans',sans-serif;color:#222;left:5.3px;top:98.1px;transform:rotate(-90deg);transform-origin:50% 50%;">350</span>
<span class="t" style="font:normal normal 3.50px/5px 'Liberation Sans',sans-serif;color:#222;left:5.3px;top:111.3px;transform:rotate(-90deg);transform-origin:50% 50%;">300</span>
<span class="t" style="font:normal normal 3.50px/5px 'Liberation Sans',sans-serif;color:#222;left:5.3px;top:124.4px;transform:rotate(-90deg);transform-origin:50% 50%;">250</span>
<span class="t" style="font:normal normal 3.50px/5px 'Liberation Sans',sans-serif;color:#222;left:5.3px;top:137.6px;transform:rotate(-90deg);transform-origin:50% 50%;">200</span>
<span class="t" style="font:normal normal 3.50px/5px 'Liberation Sans',sans-serif;color:#222;left:5.3px;top:150.8px;transform:rotate(-90deg);transform-origin:50% 50%;">150</span>
<span class="t" style="font:normal normal 3.50px/5px 'Liberation Sans',sans-serif;color:#222;left:5.3px;top:163.9px;transform:rotate(-90deg);transform-origin:50% 50%;">100</span>
<span class="t" style="font:normal normal 3.50px/5px 'Liberation Sans',sans-serif;color:#222;left:6.3px;top:177.1px;transform:rotate(-90deg);transform-origin:50% 50%;">50</span>
<span class="t" style="font:normal normal 4.10px/5px 'Liberation Sans',sans-serif;color:#222;left:-17.8px;top:24.3px;transform:rotate(-90deg);transform-origin:50% 50%;">Throughput (KBytes/s)</span>
<span class="t" style="font:normal normal 3.60px/5px 'Liberation Sans',sans-serif;color:#222;left:157.5px;top:193.8px;">4,440</span>
<span class="t" style="font:normal normal 3.60px/5px 'Liberation Sans',sans-serif;color:#222;left:184.0px;top:193.8px;">4,450</span>
<span class="t" style="font:normal normal 3.60px/5px 'Liberation Sans',sans-serif;color:#222;left:210.5px;top:193.8px;">4,460</span>
<span class="t" style="font:normal normal 3.60px/5px 'Liberation Sans',sans-serif;color:#222;left:232.5px;top:193.8px;">Time (s)</span>
<div style="left:246.0px;top:177.0px;width:5.0px;height:14.0px;background:#e4e4e4;border:1px solid #b0b0b0"></div>
<div style="left:237.0px;top:198.5px;width:6.0px;height:4.5px;background:#e8e8e8;border:1px solid #aaa"></div>
</div>
<div style="left:362.0px;top:73.0px;width:240.0px;height:101.5px;background:#f0f0f0;border:1px solid #8c8c8c;box-shadow:3px 5px 6px rgba(0,0,0,.7);overflow:hidden">
<span class="t" style="font:normal normal 8.60px/11px 'Liberation Sans',sans-serif;color:#111;left:25.5px;top:2.5px;transform:scaleX(0.877);">USB2 Packet Length</span>
<div style="left:22.0px;top:15.5px;width:217.0px;height:43.5px;background:#fff;border-top:1px solid #777;border-left:1px solid #999"></div>
<div style="left:68.7px;top:16.5px;width:1.0px;height:42.5px;background:#e3e3e3"></div>
<div style="left:109.7px;top:16.5px;width:1.0px;height:42.5px;background:#e3e3e3"></div>
<div style="left:150.5px;top:16.5px;width:1.0px;height:42.5px;background:#e3e3e3"></div>
<div style="left:191.5px;top:16.5px;width:1.0px;height:42.5px;background:#e3e3e3"></div>
<div style="left:34.0px;top:52.0px;width:1.7px;height:7.0px;background:#5aa75a"></div>
<div style="left:38.1px;top:52.0px;width:1.7px;height:7.0px;background:#5aa75a"></div>
<div style="left:42.1px;top:52.0px;width:1.7px;height:7.0px;background:#5aa75a"></div>
<div style="left:46.2px;top:52.0px;width:1.7px;height:7.0px;background:#5aa75a"></div>
<div style="left:50.2px;top:52.0px;width:1.7px;height:7.0px;background:#5aa75a"></div>
<div style="left:54.3px;top:52.0px;width:1.7px;height:7.0px;background:#5aa75a"></div>
<div style="left:58.4px;top:52.0px;width:1.7px;height:7.0px;background:#5aa75a"></div>
<div style="left:62.4px;top:52.0px;width:1.7px;height:7.0px;background:#5aa75a"></div>
<div style="left:66.5px;top:52.0px;width:1.7px;height:7.0px;background:#5aa75a"></div>
<div style="left:70.5px;top:52.0px;width:1.7px;height:7.0px;background:#5aa75a"></div>
<div style="left:74.6px;top:52.0px;width:1.7px;height:7.0px;background:#5aa75a"></div>
<div style="left:78.7px;top:52.0px;width:1.7px;height:7.0px;background:#5aa75a"></div>
<div style="left:82.7px;top:52.0px;width:1.7px;height:7.0px;background:#5aa75a"></div>
<div style="left:86.8px;top:52.0px;width:1.7px;height:7.0px;background:#5aa75a"></div>
<div style="left:182.0px;top:52.0px;width:1.7px;height:7.0px;background:#5aa75a"></div>
<div style="left:186.1px;top:52.0px;width:1.7px;height:7.0px;background:#5aa75a"></div>
<div style="left:190.1px;top:52.0px;width:1.7px;height:7.0px;background:#5aa75a"></div>
<div style="left:194.2px;top:52.0px;width:1.7px;height:7.0px;background:#5aa75a"></div>
<div style="left:198.2px;top:52.0px;width:1.7px;height:7.0px;background:#5aa75a"></div>
<div style="left:202.3px;top:52.0px;width:1.7px;height:7.0px;background:#5aa75a"></div>
<div style="left:206.4px;top:52.0px;width:1.7px;height:7.0px;background:#5aa75a"></div>
<div style="left:210.4px;top:52.0px;width:1.7px;height:7.0px;background:#5aa75a"></div>
<div style="left:214.5px;top:52.0px;width:1.7px;height:7.0px;background:#5aa75a"></div>
<div style="left:218.5px;top:52.0px;width:1.7px;height:7.0px;background:#5aa75a"></div>
<div style="left:23.5px;top:50.5px;width:2.5px;height:8.5px;background:#4da04d"></div>
<div style="left:28.5px;top:43.0px;width:1.5px;height:16.0px;background:#2f8f3f"></div>
<div style="left:87.4px;top:19.5px;width:92.6px;height:39.5px;background:#187c3e"></div>
<div style="left:124.2px;top:19.5px;width:1.1px;height:39.5px;background:#b9d8a8"></div>
<div style="left:186.0px;top:14.0px;width:1.6px;height:45.0px;background:#35b8e0"></div>
<div style="left:22.0px;top:59.0px;width:217.0px;height:1.0px;background:#555"></div>
<div style="left:22.2px;top:15.0px;width:1.2px;height:44.0px;border-left:1.2px dotted #2233aa"></div>
<svg style="left:-1.0px;top:-0.5px" width="240" height="30" viewBox="362 73.5 240 30"><polygon points="383.3,87 388,87 385.6,90" fill="#2a3fb0"/><polygon points="546.8,86.6 552.8,86.6 549.8,90.2" fill="#2a6070"/><polygon points="563,90.5 575,90.5 573,96 565,96" fill="#e0a030"/></svg>
<span class="t" style="font:normal normal 8.40px/11px 'Liberation Sans',sans-serif;color:#111;left:22.7px;top:60.2px;transform:scaleX(0.888);">10</span>
<span class="t" style="font:normal normal 8.40px/11px 'Liberation Sans',sans-serif;color:#111;left:63.9px;top:60.2px;transform:scaleX(0.888);">20</span>
<span class="t" style="font:normal normal 8.40px/11px 'Liberation Sans',sans-serif;color:#111;left:104.9px;top:60.2px;transform:scaleX(0.888);">30</span>
<span class="t" style="font:normal normal 8.40px/11px 'Liberation Sans',sans-serif;color:#111;left:145.6px;top:60.2px;transform:scaleX(0.888);">40</span>
<span class="t" style="font:normal normal 8.40px/11px 'Liberation Sans',sans-serif;color:#111;left:186.6px;top:60.2px;transform:scaleX(0.888);">50</span>
<span class="t" style="font:normal normal 8.40px/11px 'Liberation Sans',sans-serif;color:#111;left:-20.4px;top:36.5px;transform:rotate(-90deg) scaleX(.93);transform-origin:50% 50%;">Length (bytes)</span>
<span class="t" style="font:normal normal 7.50px/10px 'Liberation Sans',sans-serif;color:#111;left:15.4px;top:52.5px;transform:rotate(-90deg);transform-origin:50% 50%;">0</span>
<div style="left:22.0px;top:72.5px;width:217.0px;height:9.0px;background:#efefef"></div>
<div style="left:34.0px;top:72.8px;width:205.0px;height:8.4px;background:linear-gradient(#f4f4f4,#d6d6d6);border:1px solid #a5a5a5;border-radius:2px"></div>
<span class="t" style="font:normal normal 7.00px/9px 'Liberation Sans',sans-serif;color:#333;left:23.4px;top:72.5px;">◂</span>
<span class="t" style="font:normal normal 4.00px/5px 'Liberation Sans',sans-serif;color:#666;left:202.4px;top:74.0px;">|||</span>
<div style="left:22.0px;top:85.5px;width:217.0px;height:11.0px;background:#f4f4f4;border:1px solid #b4b4b4"></div>
<span class="t" style="font:normal normal 8.60px/11px 'Liberation Sans',sans-serif;color:#111;left:25.0px;top:85.8px;transform:scaleX(0.878);">Time:18s, Length:204bytes, Packet:280103 (SOF)</span>
</div>
<div style="left:582.0px;top:61.0px;width:197.0px;height:173.5px;background:#f1f1f1;border:1px solid #161616;box-shadow:4px 5px 5px rgba(0,0,0,.8);">
<div style="left:17.0px;top:1.0px;width:1.0px;height:170.0px;background:#e2e3e3"></div>
<div style="left:0.0px;top:48.2px;width:195.0px;height:16.4px;background:linear-gradient(#f5f8fc,#e8eef8);border:1px solid #c3d8f3;border-radius:1px;"></div>
<span class="t" style="font:normal bold 8.30px/11px 'Liberation Sans',sans-serif;color:#1a1a1a;left:21.7px;top:2.8px;transform:scaleX(0.864);">Go to Trigger</span>
<span class="t" style="font:normal bold 8.30px/11px 'Liberation Sans',sans-serif;color:#1a1a1a;left:21.7px;top:18.9px;transform:scaleX(0.868);">Go to Packet/Transaction/Transfer...</span>
<span class="t" style="font:normal bold 8.30px/11px 'Liberation Sans',sans-serif;color:#1a1a1a;left:165.5px;top:18.9px;transform:scaleX(0.900);">Ctrl+G</span>
<span class="t" style="font:normal bold 8.30px/11px 'Liberation Sans',sans-serif;color:#1a1a1a;left:21.7px;top:35.0px;transform:scaleX(0.879);">Go to Marker</span>
<span class="t" style="font:normal bold 8.30px/11px 'Liberation Sans',sans-serif;color:#1a1a1a;left:165.1px;top:35.0px;transform:scaleX(0.900);">Ctrl+M</span>
<svg style="left:190.3px;top:37.5px" width="4" height="6" viewBox="0 0 4 6"><polygon points="0,0 3.2,3 0,6" fill="#111"/></svg>
<span class="t" style="font:normal bold 8.30px/11px 'Liberation Sans',sans-serif;color:#1a1a1a;left:21.7px;top:51.1px;transform:scaleX(0.859);">Go to USB 2.0</span>
<svg style="left:190.3px;top:53.6px" width="4" height="6" viewBox="0 0 4 6"><polygon points="0,0 3.2,3 0,6" fill="#111"/></svg>
<span class="t" style="font:normal bold 8.30px/11px 'Liberation Sans',sans-serif;color:#1a1a1a;left:21.7px;top:67.2px;transform:scaleX(0.859);">Go to USB 3.0</span>
<svg style="left:190.3px;top:69.7px" width="4" height="6" viewBox="0 0 4 6"><polygon points="0,0 3.2,3 0,6" fill="#111"/></svg>
<span class="t" style="font:normal bold 8.30px/11px 'Liberation Sans',sans-serif;color:#1a1a1a;left:21.7px;top:83.3px;transform:scaleX(0.891);">Go to Channel</span>
<svg style="left:190.3px;top:85.8px" width="4" height="6" viewBox="0 0 4 6"><polygon points="0,0 3.2,3 0,6" fill="#111"/></svg>
<span class="t" style="font:normal bold 8.30px/11px 'Liberation Sans',sans-serif;color:#1a1a1a;left:21.7px;top:99.5px;transform:scaleX(0.854);">Go to SCSI</span>
<svg style="left:190.3px;top:102.0px" width="4" height="6" viewBox="0 0 4 6"><polygon points="0,0 3.2,3 0,6" fill="#111"/></svg>
<div style="left:19.0px;top:115.5px;width:176.0px;height:1.0px;background:#dcdcdc"></div>
<span class="t" style="font:normal bold 8.30px/11px 'Liberation Sans',sans-serif;color:#1a1a1a;left:21.3px;top:121.7px;transform:scaleX(0.860);">Find...</span>
<span class="t" style="font:normal bold 8.30px/11px 'Liberation Sans',sans-serif;color:#8a8a8a;left:21.3px;top:137.8px;transform:scaleX(0.860);">Find Next</span>
<span class="t" style="font:normal bold 8.30px/11px 'Liberation Sans',sans-serif;color:#8a8a8a;left:179.3px;top:137.8px;transform:scaleX(0.900);">F3</span>
<div style="left:19.0px;top:153.0px;width:176.0px;height:1.0px;background:#dcdcdc"></div>
<span class="t" style="font:normal bold 8.30px/11px 'Liberation Sans',sans-serif;color:#1a1a1a;left:21.3px;top:159.4px;transform:scaleX(0.857);">Search Direction</span>
<span class="t" style="font:normal bold 8.30px/11px 'Liberation Sans',sans-serif;color:#1a1a1a;left:159.0px;top:159.4px;transform:scaleX(0.886);">Forward</span>
<svg style="left:2.3px;top:121.3px" width="12" height="11" viewBox="0 0 12 11" preserveAspectRatio="none"><path d="M2.2 0.4h2.4v2.6h2.8V0.4h2.4l1.8 6.8v3H7.6V6.4H4.4v3.8H0.4v-3z" fill="#1c2630"/><rect x="1.3" y="7.3" width="2.4" height="2" fill="#2fb0b8"/><rect x="8.3" y="7.3" width="2.4" height="2" fill="#2fb0b8"/></svg>
<svg style="left:2.3px;top:137.5px" width="12" height="11" viewBox="0 0 12 11" preserveAspectRatio="none"><path d="M2.2 0.4h2.4v2.6h2.8V0.4h2.4l1.8 6.8v3H7.6V6.4H4.4v3.8H0.4v-3z" fill="#a9a9a9"/><rect x="1.3" y="7.3" width="2.4" height="2" fill="#bdbdbd"/><rect x="8.3" y="7.3" width="2.4" height="2" fill="#bdbdbd"/></svg>
<svg style="left:8.5px;top:136.0px" width="6" height="5" viewBox="0 0 6 5"><polygon points="3,0 6,3.4 4.2,3.4 4.2,5 1.8,5 1.8,3.4 0,3.4" fill="#a9a9a9"/></svg>
</div>
<div style="left:779.0px;top:110.4px;width:129.0px;height:129.4px;background:#f1f1f1;border:1px solid #161616;box-shadow:4px 5px 5px rgba(0,0,0,.8);">
<div style="left:17.5px;top:1.6px;width:1.0px;height:125.0px;background:#e2e3e3"></div>
<div style="left:1.0px;top:0.9px;width:125.5px;height:15.0px;background:linear-gradient(#f5f8fc,#e8eef8);border:1px solid #c3d8f3;border-radius:1px;"></div>
<span class="t" style="font:normal bold 8.30px/11px 'Liberation Sans',sans-serif;color:#1a1a1a;left:21.3px;top:2.7px;transform:scaleX(0.904);">PID</span>
<svg style="left:122.3px;top:5.2px" width="4" height="6" viewBox="0 0 4 6"><polygon points="0,0 3.2,3 0,6" fill="#111"/></svg>
<span class="t" style="font:normal bold 8.30px/11px 'Liberation Sans',sans-serif;color:#1a1a1a;left:21.3px;top:18.8px;transform:scaleX(0.813);">ANY Error</span>
<span class="t" style="font:normal bold 8.30px/11px 'Liberation Sans',sans-serif;color:#1a1a1a;left:77.0px;top:18.8px;transform:scaleX(0.914);">Ctrl+Shift+2</span>
<span class="t" style="font:normal bold 8.30px/11px 'Liberation Sans',sans-serif;color:#1a1a1a;left:21.3px;top:35.0px;transform:scaleX(0.830);">Specific Errors</span>
<svg style="left:122.3px;top:37.5px" width="4" height="6" viewBox="0 0 4 6"><polygon points="0,0 3.2,3 0,6" fill="#111"/></svg>
<span class="t" style="font:normal bold 8.30px/11px 'Liberation Sans',sans-serif;color:#1a1a1a;left:21.3px;top:51.1px;transform:scaleX(0.855);">Data Length</span>
<svg style="left:122.3px;top:53.6px" width="4" height="6" viewBox="0 0 4 6"><polygon points="0,0 3.2,3 0,6" fill="#111"/></svg>
<span class="t" style="font:normal bold 8.30px/11px 'Liberation Sans',sans-serif;color:#1a1a1a;left:21.3px;top:67.2px;transform:scaleX(0.868);">Addr &amp; Endp</span>
<svg style="left:122.3px;top:69.7px" width="4" height="6" viewBox="0 0 4 6"><polygon points="0,0 3.2,3 0,6" fill="#111"/></svg>
<span class="t" style="font:normal bold 8.30px/11px 'Liberation Sans',sans-serif;color:#1a1a1a;left:21.3px;top:83.3px;transform:scaleX(0.865);">Bus Conditions</span>
<svg style="left:122.3px;top:85.8px" width="4" height="6" viewBox="0 0 4 6"><polygon points="0,0 3.2,3 0,6" fill="#111"/></svg>
<span class="t" style="font:normal bold 8.30px/11px 'Liberation Sans',sans-serif;color:#1a1a1a;left:21.3px;top:99.5px;transform:scaleX(0.892);">Split HubAddr &amp; Port</span>
<svg style="left:122.3px;top:102.0px" width="4" height="6" viewBox="0 0 4 6"><polygon points="0,0 3.2,3 0,6" fill="#111"/></svg>
<span class="t" style="font:normal bold 8.30px/11px 'Liberation Sans',sans-serif;color:#1a1a1a;left:21.3px;top:115.6px;transform:scaleX(0.889);">On-The-Go</span>
<svg style="left:122.3px;top:118.1px" width="4" height="6" viewBox="0 0 4 6"><polygon points="0,0 3.2,3 0,6" fill="#111"/></svg>
</div>
<div style="left:907.6px;top:110.4px;width:108.0px;height:281.4px;background:#f1f1f1;border:1px solid #161616;box-shadow:4px 5px 5px rgba(0,0,0,.8);">
<div style="left:17.9px;top:1.6px;width:1.0px;height:276.5px;background:#e2e3e3"></div>
<div style="left:0.9px;top:210.1px;width:104.5px;height:16.0px;background:linear-gradient(#f5f8fc,#e8eef8);border:1px solid #c3d8f3;border-radius:1px;"></div>
<span class="t" style="font:normal bold 8.30px/11px 'Liberation Sans',sans-serif;color:#1a1a1a;left:21.6px;top:2.6px;transform:scaleX(0.830);">OUT</span>
<span class="t" style="font:normal bold 8.30px/11px 'Liberation Sans',sans-serif;color:#1a1a1a;left:71.2px;top:2.6px;transform:scaleX(0.950);">Shift+O</span>
<span class="t" style="font:normal bold 8.30px/11px 'Liberation Sans',sans-serif;color:#1a1a1a;left:21.6px;top:18.8px;transform:scaleX(0.830);">IN</span>
<span class="t" style="font:normal bold 8.30px/11px 'Liberation Sans',sans-serif;color:#1a1a1a;left:75.1px;top:18.8px;transform:scaleX(0.950);">Shift+I</span>
<span class="t" style="font:normal bold 8.30px/11px 'Liberation Sans',sans-serif;color:#1a1a1a;left:21.6px;top:34.9px;transform:scaleX(0.830);">SOF</span>
<span class="t" style="font:normal bold 8.30px/11px 'Liberation Sans',sans-serif;color:#1a1a1a;left:72.5px;top:34.9px;transform:scaleX(0.950);">Shift+F</span>
<span class="t" style="font:normal bold 8.30px/11px 'Liberation Sans',sans-serif;color:#1a1a1a;left:21.6px;top:51.0px;transform:scaleX(0.830);">SETUP</span>
<span class="t" style="font:normal bold 8.30px/11px 'Liberation Sans',sans-serif;color:#1a1a1a;left:72.0px;top:51.0px;transform:scaleX(0.950);">Shift+S</span>
<span class="t" style="font:normal bold 8.30px/11px 'Liberation Sans',sans-serif;color:#1a1a1a;left:21.6px;top:67.2px;transform:scaleX(0.830);">DATA0</span>
<span class="t" style="font:normal bold 8.30px/11px 'Liberation Sans',sans-serif;color:#1a1a1a;left:72.9px;top:67.2px;transform:scaleX(0.950);">Shift+0</span>
<span class="t" style="font:normal bold 8.30px/11px 'Liberation Sans',sans-serif;color:#1a1a1a;left:21.6px;top:83.3px;transform:scaleX(0.830);">DATA1</span>
<span class="t" style="font:normal bold 8.30px/11px 'Liberation Sans',sans-serif;color:#1a1a1a;left:72.9px;top:83.3px;transform:scaleX(0.950);">Shift+1</span>
<span class="t" style="font:normal normal 8.30px/11px 'Liberation Sans',sans-serif;color:#8c8c8c;left:21.6px;top:99.5px;transform:scaleX(0.830);">DATA2</span>
<span class="t" style="font:normal normal 8.30px/11px 'Liberation Sans',sans-serif;color:#8c8c8c;left:74.6px;top:99.5px;transform:scaleX(0.950);">Shift+2</span>
<span class="t" style="font:normal bold 8.30px/11px 'Liberation Sans',sans-serif;color:#1a1a1a;left:21.6px;top:115.6px;transform:scaleX(0.830);">MDATA</span>
<span class="t" style="font:normal bold 8.30px/11px 'Liberation Sans',sans-serif;color:#1a1a1a;left:70.7px;top:115.6px;transform:scaleX(0.950);">Shift+M</span>
<span class="t" style="font:normal bold 8.30px/11px 'Liberation Sans',sans-serif;color:#1a1a1a;left:21.6px;top:131.8px;transform:scaleX(0.830);">ACK</span>
<span class="t" style="font:normal bold 8.30px/11px 'Liberation Sans',sans-serif;color:#1a1a1a;left:71.6px;top:131.8px;transform:scaleX(0.950);">Shift+A</span>
<span class="t" style="font:normal bold 8.30px/11px 'Liberation Sans',sans-serif;color:#1a1a1a;left:21.6px;top:148.0px;transform:scaleX(0.830);">NAK</span>
<span class="t" style="font:normal bold 8.30px/11px 'Liberation Sans',sans-serif;color:#1a1a1a;left:71.6px;top:148.0px;transform:scaleX(0.950);">Shift+N</span>
<span class="t" style="font:normal bold 8.30px/11px 'Liberation Sans',sans-serif;color:#1a1a1a;left:21.6px;top:164.1px;transform:scaleX(0.830);">STALL</span>
<span class="t" style="font:normal bold 8.30px/11px 'Liberation Sans',sans-serif;color:#1a1a1a;left:72.5px;top:164.1px;transform:scaleX(0.950);">Shift+L</span>
<span class="t" style="font:normal bold 8.30px/11px 'Liberation Sans',sans-serif;color:#1a1a1a;left:21.6px;top:180.2px;transform:scaleX(0.830);">NYET</span>
<span class="t" style="font:normal bold 8.30px/11px 'Liberation Sans',sans-serif;color:#1a1a1a;left:72.0px;top:180.2px;transform:scaleX(0.950);">Shift+Y</span>
<span class="t" style="font:normal normal 8.30px/11px 'Liberation Sans',sans-serif;color:#8c8c8c;left:21.6px;top:196.4px;transform:scaleX(0.830);">PRE/ERR</span>
<span class="t" style="font:normal normal 8.30px/11px 'Liberation Sans',sans-serif;color:#8c8c8c;left:73.8px;top:196.4px;transform:scaleX(0.950);">Shift+P</span>
<span class="t" style="font:normal bold 8.30px/11px 'Liberation Sans',sans-serif;color:#1a1a1a;left:21.6px;top:212.5px;transform:scaleX(0.830);">SPLIT</span>
<span class="t" style="font:normal bold 8.30px/11px 'Liberation Sans',sans-serif;color:#1a1a1a;left:72.0px;top:212.5px;transform:scaleX(0.950);">Shift+X</span>
<span class="t" style="font:normal bold 8.30px/11px 'Liberation Sans',sans-serif;color:#1a1a1a;left:21.6px;top:228.7px;transform:scaleX(0.830);">PING</span>
<span class="t" style="font:normal bold 8.30px/11px 'Liberation Sans',sans-serif;color:#1a1a1a;left:71.2px;top:228.7px;transform:scaleX(0.950);">Shift+G</span>
<span class="t" style="font:normal normal 8.30px/11px 'Liberation Sans',sans-serif;color:#8c8c8c;left:21.6px;top:244.8px;transform:scaleX(0.830);">EXT</span>
<span class="t" style="font:normal normal 8.30px/11px 'Liberation Sans',sans-serif;color:#8c8c8c;left:73.3px;top:244.8px;transform:scaleX(0.950);">Shift+R</span>
<div style="left:19.4px;top:260.6px;width:86.5px;height:1.0px;background:#dcdcdc"></div>
<span class="t" style="font:normal bold 8.30px/11px 'Liberation Sans',sans-serif;color:#1a1a1a;left:21.6px;top:266.8px;transform:scaleX(0.830);">DATAx</span>
<span class="t" style="font:normal bold 8.30px/11px 'Liberation Sans',sans-serif;color:#1a1a1a;left:71.6px;top:266.8px;transform:scaleX(0.950);">Shift+D</span>
</div>
<svg style="left:1005px;top:325px" width="12" height="18" viewBox="0 0 12 18"><path d="M1 1v13l3-2.8 2 4.8 2-.9-2-4.6h4z" fill="#fff" stroke="#222" stroke-width="1"/></svg>
<div style="left:176.5px;top:265.0px;width:215.0px;height:274.0px;background:#a6bad5;border:1px solid #7686a0;border-radius:3px 3px 1px 1px;box-shadow:3px 6px 6px rgba(0,0,0,.8);overflow:hidden">
<div style="left:-1.0px;top:-1.0px;width:215.0px;height:16.0px;background:linear-gradient(#a4b9d5,#9bb2cf)"></div>
<span class="t" style="font:normal bold 8.40px/11px 'Liberation Sans',sans-serif;color:#1a1a1a;left:2.5px;top:3.1px;transform:scaleX(0.865);text-shadow:0 0 2px rgba(255,255,255,.6);">Traffic Summary</span>
<div style="left:201.0px;top:1.5px;width:9.5px;height:10.0px;background:linear-gradient(#e08070,#cc5040);border:1px solid #7a3a34;border-radius:2px"></div>
<span class="t" style="font:normal bold 7.00px/9px 'Liberation Sans',sans-serif;color:#fff;left:203.9px;top:1.8px;text-shadow:0 0 1px #733;">x</span>
<div style="left:1.5px;top:14.6px;width:210.5px;height:18.4px;background:#f3f4f8"></div>
<div style="left:1.5px;top:14.6px;width:52.4px;height:18.4px;background:linear-gradient(#e2e8f5,#d4dcee)"></div>
<svg style="left:7.0px;top:18.5px" width="11" height="11" viewBox="0 0 11 11"><rect x=".5" y=".5" width="10" height="10" fill="#1c1c1c"/><rect x="2.3" y="1" width="6.4" height="4" fill="#f4f4f4"/><rect x="3" y="6.8" width="5" height="3.7" fill="#3a7a3a"/></svg>
<svg style="left:24.5px;top:20.0px" width="12" height="8" viewBox="0 0 12 8"><rect x=".5" y=".5" width="11" height="7" fill="#f0e878" stroke="#555" stroke-width="1"/><rect x="2" y="2.3" width="8" height="1" fill="#c8b848"/></svg>
<svg style="left:43.5px;top:18.5px" width="7" height="12" viewBox="0 0 7 12"><path d="M5.8 0.6C3.4 3 1.2 6.2 1.2 8.8C1.2 11 4.6 11 5.8 9.8" fill="none" stroke="#2a2a2a" stroke-width="1.1"/></svg>
<div style="left:63.0px;top:18.0px;width:31.0px;height:12.5px;background:#f6f7f9;border:1px solid #b9bec8;border-radius:2px"></div>
<span class="t" style="font:normal normal 8.30px/11px 'Liberation Sans',sans-serif;color:#9a9a9a;left:67.0px;top:18.7px;transform:scaleX(0.858);">Go</span>
<svg style="left:80.0px;top:19.7px" width="11" height="9" viewBox="0 0 11 9"><path d="M0.5 8c0-3.5 2-5 5.5-5V0.6l4.5 3.9L6 8.4V6C3.5 6 1.8 6.5 0.5 8z" fill="#a9a9a9"/></svg>
<div style="left:96.0px;top:18.0px;width:30.5px;height:12.5px;background:#f2f2f2;border:1px solid #c4c4c4"></div>
<span class="t" style="font:normal normal 8.30px/11px 'Liberation Sans',sans-serif;color:#9a9a9a;left:99.5px;top:18.8px;">0</span>
<div style="left:128.0px;top:18.0px;width:10.5px;height:12.5px;background:#f4f4f4;border:1px solid #c4c4c4;border-radius:2px"></div>
<div style="left:129.0px;top:24.0px;width:8.5px;height:0.8px;background:#c4c4c4"></div>
<svg style="left:130.5px;top:19.6px" width="5.5" height="9.4" viewBox="0 0 5.5 9.4"><polygon points="0,3.2 5.5,3.2 2.75,0" fill="#b0b0b0"/><polygon points="0,6.2 5.5,6.2 2.75,9.4" fill="#b0b0b0"/></svg>
<span class="t" style="font:normal normal 8.30px/11px 'Liberation Sans',sans-serif;color:#9a9a9a;left:141.0px;top:18.8px;transform:scaleX(0.987);letter-spacing:.1px;">of ### - Packet ###</span>
<div style="left:3.5px;top:33.5px;width:206.5px;height:237.5px;background:#fff;border:1px solid #8c95a3"></div>
<div style="left:6.5px;top:34.5px;width:10.0px;height:235.5px;background:#e8202a"></div>
<span class="t" style="font:normal normal 8.00px/10px 'Liberation Sans',sans-serif;color:#ffc4b8;left:-17.6px;top:233.0px;transform:rotate(-90deg);transform-origin:50% 50%;">USB 2 - 0 Errors</span>
<div style="left:16.5px;top:34.5px;width:183.0px;height:15.5px;background:linear-gradient(#fff,#f3f4f6);border-bottom:1px solid #dcdcdc"></div>
<div style="left:127.0px;top:34.5px;width:1.0px;height:221.5px;background:#ececec"></div>
<span class="t" style="font:normal normal 8.40px/11px 'Liberation Sans',sans-serif;color:#222;left:21.0px;top:37.7px;transform:scaleX(0.878);">Type</span>
<span class="t" style="font:normal normal 6.00px/8px 'Liberation Sans',sans-serif;color:#666;left:47.0px;top:39.0px;">/</span>
<span class="t" style="font:normal normal 8.40px/11px 'Liberation Sans',sans-serif;color:#222;left:131.5px;top:37.7px;transform:scaleX(0.811);">Ch0</span>
<div style="left:16.5px;top:63.4px;width:183.0px;height:0.8px;background:#f0f0f0"></div>
<span class="t" style="font:normal bold 8.80px/11px 'Liberation Sans',sans-serif;color:#111;left:19.7px;top:51.7px;transform:scaleX(0.970);">Bad PID</span>
<span class="t" style="font:normal normal 8.70px/11px 'Liberation Sans',sans-serif;color:#33339c;left:131.0px;top:51.7px;transform:scaleX(0.850);">11</span>
<div style="left:16.5px;top:76.2px;width:183.0px;height:0.8px;background:#f0f0f0"></div>
<span class="t" style="font:normal bold 8.80px/11px 'Liberation Sans',sans-serif;color:#111;left:19.7px;top:64.5px;transform:scaleX(0.970);">Bad CRC5</span>
<span class="t" style="font:normal normal 8.70px/11px 'Liberation Sans',sans-serif;color:#111;left:131.0px;top:64.5px;transform:scaleX(0.850);">0</span>
<div style="left:16.5px;top:89.0px;width:183.0px;height:0.8px;background:#f0f0f0"></div>
<span class="t" style="font:normal bold 8.80px/11px 'Liberation Sans',sans-serif;color:#111;left:19.7px;top:77.3px;transform:scaleX(0.970);">Bad CRC16</span>
<span class="t" style="font:normal normal 8.70px/11px 'Liberation Sans',sans-serif;color:#111;left:131.0px;top:77.3px;transform:scaleX(0.850);">0</span>
<div style="left:16.5px;top:101.7px;width:183.0px;height:0.8px;background:#f0f0f0"></div>
<span class="t" style="font:normal bold 8.80px/11px 'Liberation Sans',sans-serif;color:#111;left:19.7px;top:90.0px;transform:scaleX(0.970);">Bad Packet Length</span>
<span class="t" style="font:normal normal 8.70px/11px 'Liberation Sans',sans-serif;color:#111;left:131.0px;top:90.0px;transform:scaleX(0.850);">0</span>
<div style="left:16.5px;top:114.5px;width:183.0px;height:0.8px;background:#f0f0f0"></div>
<span class="t" style="font:normal bold 8.80px/11px 'Liberation Sans',sans-serif;color:#111;left:19.7px;top:102.8px;transform:scaleX(0.970);">Bad Stuff Bits</span>
<span class="t" style="font:normal normal 8.70px/11px 'Liberation Sans',sans-serif;color:#111;left:131.0px;top:102.8px;transform:scaleX(0.850);">0</span>
<div style="left:16.5px;top:127.3px;width:183.0px;height:0.8px;background:#f0f0f0"></div>
<span class="t" style="font:normal bold 8.80px/11px 'Liberation Sans',sans-serif;color:#111;left:19.7px;top:115.6px;transform:scaleX(0.970);">Bad EOP</span>
<span class="t" style="font:normal normal 8.70px/11px 'Liberation Sans',sans-serif;color:#111;left:131.0px;top:115.6px;transform:scaleX(0.850);">0</span>
<div style="left:16.5px;top:140.1px;width:183.0px;height:0.8px;background:#f0f0f0"></div>
<span class="t" style="font:normal bold 8.80px/11px 'Liberation Sans',sans-serif;color:#111;left:19.7px;top:128.4px;transform:scaleX(0.970);">Babble Start</span>
<span class="t" style="font:normal normal 8.70px/11px 'Liberation Sans',sans-serif;color:#111;left:131.0px;top:128.4px;transform:scaleX(0.850);">0</span>
<div style="left:16.5px;top:152.9px;width:183.0px;height:0.8px;background:#f0f0f0"></div>
<span class="t" style="font:normal bold 8.80px/11px 'Liberation Sans',sans-serif;color:#111;left:19.7px;top:141.2px;transform:scaleX(0.970);">Babble End (LOA)</span>
<span class="t" style="font:normal normal 8.70px/11px 'Liberation Sans',sans-serif;color:#111;left:131.0px;top:141.2px;transform:scaleX(0.850);">0</span>
<div style="left:16.5px;top:165.6px;width:183.0px;height:0.8px;background:#f0f0f0"></div>
<span class="t" style="font:normal bold 8.80px/11px 'Liberation Sans',sans-serif;color:#111;left:19.7px;top:153.9px;transform:scaleX(0.970);">Bad Frame Length</span>
<span class="t" style="font:normal normal 8.70px/11px 'Liberation Sans',sans-serif;color:#111;left:131.0px;top:153.9px;transform:scaleX(0.850);">0</span>
<div style="left:16.5px;top:178.4px;width:183.0px;height:0.8px;background:#f0f0f0"></div>
<span class="t" style="font:normal bold 8.80px/11px 'Liberation Sans',sans-serif;color:#111;left:19.7px;top:166.7px;transform:scaleX(0.970);">Bad Turnaround/Timeout</span>
<span class="t" style="font:normal normal 8.70px/11px 'Liberation Sans',sans-serif;color:#111;left:131.0px;top:166.7px;transform:scaleX(0.850);">0</span>
<div style="left:16.5px;top:191.2px;width:183.0px;height:0.8px;background:#f0f0f0"></div>
<span class="t" style="font:normal bold 8.80px/11px 'Liberation Sans',sans-serif;color:#111;left:19.7px;top:179.5px;transform:scaleX(0.970);">Bad Data Toggle</span>
<span class="t" style="font:normal normal 8.70px/11px 'Liberation Sans',sans-serif;color:#111;left:131.0px;top:179.5px;transform:scaleX(0.850);">0</span>
<div style="left:16.5px;top:204.0px;width:183.0px;height:0.8px;background:#f0f0f0"></div>
<span class="t" style="font:normal bold 8.80px/11px 'Liberation Sans',sans-serif;color:#111;left:19.7px;top:192.3px;transform:scaleX(0.970);">Bad Frame/uFrame</span>
<span class="t" style="font:normal normal 8.70px/11px 'Liberation Sans',sans-serif;color:#111;left:131.0px;top:192.3px;transform:scaleX(0.850);">0</span>
<div style="left:16.5px;top:216.8px;width:183.0px;height:0.8px;background:#f0f0f0"></div>
<span class="t" style="font:normal bold 8.80px/11px 'Liberation Sans',sans-serif;color:#111;left:19.7px;top:205.1px;transform:scaleX(0.970);">Analyzer Internal Error</span>
<span class="t" style="font:normal normal 8.70px/11px 'Liberation Sans',sans-serif;color:#111;left:131.0px;top:205.1px;transform:scaleX(0.850);">0</span>
<div style="left:16.5px;top:229.5px;width:183.0px;height:0.8px;background:#f0f0f0"></div>
<span class="t" style="font:normal bold 8.80px/11px 'Liberation Sans',sans-serif;color:#111;left:19.7px;top:217.8px;transform:scaleX(0.970);">Last Byte Incomplete</span>
<span class="t" style="font:normal normal 8.70px/11px 'Liberation Sans',sans-serif;color:#111;left:131.0px;top:217.8px;transform:scaleX(0.850);">0</span>
<div style="left:16.5px;top:242.3px;width:183.0px;height:0.8px;background:#f0f0f0"></div>
<span class="t" style="font:normal bold 8.80px/11px 'Liberation Sans',sans-serif;color:#111;left:19.7px;top:230.6px;transform:scaleX(0.970);">Bad OTG Signal Value</span>
<span class="t" style="font:normal normal 8.70px/11px 'Liberation Sans',sans-serif;color:#111;left:131.0px;top:230.6px;transform:scaleX(0.850);">0</span>
<div style="left:16.5px;top:255.1px;width:183.0px;height:0.8px;background:#f0f0f0"></div>
<span class="t" style="font:normal bold 8.80px/11px 'Liberation Sans',sans-serif;color:#111;left:19.7px;top:243.4px;transform:scaleX(0.970);">TP Non-Zero Reserved</span>
<span class="t" style="font:normal normal 8.70px/11px 'Liberation Sans',sans-serif;color:#111;left:131.0px;top:243.4px;transform:scaleX(0.850);">0</span>
<div style="left:199.5px;top:34.5px;width:10.0px;height:222.5px;background:#f0f0f0;border-left:1px solid #e0e0e0"></div>
<span class="t" style="font:normal normal 6.00px/8px 'Liberation Sans',sans-serif;color:#444;left:202.2px;top:38.0px;font-family:'DejaVu Sans',sans-serif;">▴</span>
<div style="left:201.0px;top:48.0px;width:7.5px;height:106.0px;background:linear-gradient(90deg,#f6f6f6,#dcdcdc);border:1px solid #a8a8a8;border-radius:2px"></div>
<div style="left:16.5px;top:258.5px;width:193.0px;height:11.5px;background:#f0f0f0"></div>
<span class="t" style="font:normal normal 6.50px/8px 'Liberation Sans',sans-serif;color:#333;left:19.6px;top:260.3px;font-family:'DejaVu Sans',sans-serif;">◂</span>
<div style="left:28.5px;top:259.5px;width:94.0px;height:9.5px;background:linear-gradient(#f6f6f6,#d8d8d8);border:1px solid #a8a8a8;border-radius:2px"></div>
<span class="t" style="font:normal normal 4.00px/5px 'Liberation Sans',sans-serif;color:#666;left:89.9px;top:261.5px;">|||</span>
</div>
<div style="left:274.0px;top:348.3px;width:190.0px;height:319.7px;background:#d9e1ed;border:1px solid #8c97a8;border-radius:3px 3px 1px 1px;box-shadow:3px 6px 6px rgba(0,0,0,.8);overflow:hidden">
<div style="left:-1.0px;top:-1.0px;width:190.0px;height:14.7px;background:linear-gradient(#dfe6f0,#d8e0ec)"></div>
<span class="t" style="font:normal normal 8.40px/11px 'Liberation Sans',sans-serif;color:#444;left:4.0px;top:1.6px;transform:scaleX(0.891);">Traffic Summary</span>
<div style="left:177.5px;top:1.2px;width:9.5px;height:9.5px;background:#dc6a60;border:1px solid #8a4a44;border-radius:2px"></div>
<span class="t" style="font:normal bold 7.00px/9px 'Liberation Sans',sans-serif;color:#fff;left:180.4px;top:1.0px;text-shadow:0 0 1px #733;">x</span>
<div style="left:1.5px;top:13.7px;width:185.0px;height:17.5px;background:#f4f5f9"></div>
<div style="left:1.5px;top:13.7px;width:83.9px;height:17.5px;background:linear-gradient(#e2e8f5,#d5dcee)"></div>
<svg style="left:7.0px;top:16.7px" width="11" height="11" viewBox="0 0 11 11"><rect x=".5" y=".5" width="10" height="10" fill="#1c1c1c"/><rect x="2.3" y="1" width="6.4" height="4" fill="#f4f4f4"/><rect x="3" y="6.8" width="5" height="3.7" fill="#3a7a3a"/></svg>
<svg style="left:24.0px;top:18.2px" width="12" height="8" viewBox="0 0 12 8"><rect x=".5" y=".5" width="11" height="7" fill="#f0e878" stroke="#555" stroke-width="1"/><rect x="2" y="2.3" width="8" height="1" fill="#c8b848"/></svg>
<svg style="left:43.0px;top:16.7px" width="13" height="11" viewBox="0 0 13 11"><rect x="3" y="0.5" width="7" height="4" fill="#f4f4f4" stroke="#555" stroke-width=".8"/><rect x=".5" y="4" width="12" height="5" rx="1" fill="#b8b8b8" stroke="#444" stroke-width=".8"/><rect x="3" y="7.5" width="7" height="3" fill="#f4f4f4" stroke="#555" stroke-width=".8"/><rect x="8.5" y="5.3" width="2" height="1.2" fill="#30a030"/></svg>
<div style="left:60.0px;top:15.7px;width:1.0px;height:13.5px;background:#b6bccb"></div>
<svg style="left:67.0px;top:16.7px" width="12" height="11" viewBox="0 0 12 11"><rect x="3.5" y=".5" width="7" height="8.5" fill="#fff" stroke="#333" stroke-width=".9"/><rect x=".5" y="2" width="6" height="8.5" fill="#e8e8e8" stroke="#333" stroke-width=".9"/></svg>
<div style="left:95.0px;top:16.0px;width:30.5px;height:12.7px;background:linear-gradient(#f0f6fc,#d2e4f4);border:1px solid #3c7fb1;border-radius:2.5px;box-shadow:inset 0 0 0 1px #bfe4f8"></div>
<span class="t" style="font:normal normal 8.30px/11px 'Liberation Sans',sans-serif;color:#111;left:98.7px;top:16.8px;transform:scaleX(0.858);">Go</span>
<svg style="left:111.5px;top:17.8px" width="11" height="9" viewBox="0 0 11 9"><path d="M0.5 8c0-3.5 2-5 5.5-5V0.6l4.5 3.9L6 8.4V6C3.5 6 1.8 6.5 0.5 8z" fill="#9a9ea4"/></svg>
<div style="left:127.0px;top:16.0px;width:31.0px;height:12.7px;background:#fff;border:1px solid #d4d4d4"></div>
<span class="t" style="font:normal normal 8.30px/11px 'Liberation Sans',sans-serif;color:#111;left:131.0px;top:16.9px;">3</span>
<div style="left:160.0px;top:16.0px;width:10.5px;height:12.5px;background:#f4f4f4;border:1px solid #999;border-radius:2px"></div>
<div style="left:161.0px;top:22.0px;width:8.5px;height:0.8px;background:#999"></div>
<svg style="left:162.5px;top:17.6px" width="5.5" height="9.4" viewBox="0 0 5.5 9.4"><polygon points="0,3.2 5.5,3.2 2.75,0" fill="#444"/><polygon points="0,6.2 5.5,6.2 2.75,9.4" fill="#444"/></svg>
<span class="t" style="font:normal normal 8.30px/11px 'Liberation Sans',sans-serif;color:#111;left:173.0px;top:16.9px;transform:scaleX(1.012);">of 4</span>
<div style="left:2.2px;top:31.2px;width:184.3px;height:285.5px;background:#fff;border:1px solid #8c95a3"></div>
<div style="left:7.0px;top:32.2px;width:9.6px;height:283.5px;background:#f2ee7c"></div>
<span class="t" style="font:normal normal 8.00px/10px 'Liberation Sans',sans-serif;color:#4a4a10;left:-22.4px;top:274.4px;transform:rotate(-90deg);transform-origin:50% 50%;">All Traffic - Packets</span>
<div style="left:16.6px;top:32.2px;width:160.4px;height:16.5px;background:linear-gradient(#fff,#f3f4f6);border-bottom:1px solid #dcdcdc"></div>
<div style="left:97.3px;top:32.2px;width:1.0px;height:283.5px;background:#ececec"></div>
<div style="left:140.8px;top:32.2px;width:1.0px;height:283.5px;background:#ececec"></div>
<span class="t" style="font:normal normal 8.40px/11px 'Liberation Sans',sans-serif;color:#222;left:21.0px;top:36.5px;transform:scaleX(0.878);">Type</span>
<span class="t" style="font:normal normal 6.00px/8px 'Liberation Sans',sans-serif;color:#666;left:47.5px;top:37.8px;">/</span>
<span class="t" style="font:normal normal 8.40px/11px 'Liberation Sans',sans-serif;color:#222;left:101.7px;top:36.5px;transform:scaleX(0.869);">Ch0</span>
<span class="t" style="font:normal normal 8.40px/11px 'Liberation Sans',sans-serif;color:#222;left:145.3px;top:36.5px;transform:scaleX(0.986);">Total</span>
<div style="left:16.6px;top:61.7px;width:160.4px;height:0.8px;background:#f0f0f0"></div>
<span class="t" style="font:normal bold 8.80px/11px 'Liberation Sans',sans-serif;color:#111;left:20.3px;top:50.0px;transform:scaleX(0.940);">OUT</span>
<span class="t" style="font:normal normal 8.70px/11px 'Liberation Sans',sans-serif;color:#33339c;left:100.0px;top:50.0px;transform:scaleX(0.850);-webkit-text-stroke:.25px #33339c;">136</span>
<span class="t" style="font:normal normal 8.70px/11px 'Liberation Sans',sans-serif;color:#33339c;left:143.3px;top:50.0px;transform:scaleX(0.850);-webkit-text-stroke:.25px #33339c;">136</span>
<div style="left:16.6px;top:74.5px;width:160.4px;height:0.8px;background:#f0f0f0"></div>
<span class="t" style="font:normal bold 8.80px/11px 'Liberation Sans',sans-serif;color:#111;left:20.3px;top:62.8px;transform:scaleX(0.940);">IN</span>
<span class="t" style="font:normal normal 8.70px/11px 'Liberation Sans',sans-serif;color:#33339c;left:100.0px;top:62.8px;transform:scaleX(0.850);-webkit-text-stroke:.25px #33339c;">382</span>
<span class="t" style="font:normal normal 8.70px/11px 'Liberation Sans',sans-serif;color:#33339c;left:143.3px;top:62.8px;transform:scaleX(0.850);-webkit-text-stroke:.25px #33339c;">382</span>
<div style="left:16.6px;top:87.3px;width:160.4px;height:0.8px;background:#f0f0f0"></div>
<span class="t" style="font:normal bold 8.80px/11px 'Liberation Sans',sans-serif;color:#111;left:20.3px;top:75.6px;transform:scaleX(0.940);">SOF</span>
<span class="t" style="font:normal normal 8.70px/11px 'Liberation Sans',sans-serif;color:#33339c;left:100.0px;top:75.6px;transform:scaleX(0.850);-webkit-text-stroke:.25px #33339c;">94691</span>
<span class="t" style="font:normal normal 8.70px/11px 'Liberation Sans',sans-serif;color:#33339c;left:143.3px;top:75.6px;transform:scaleX(0.850);-webkit-text-stroke:.25px #33339c;">94691</span>
<div style="left:16.6px;top:100.2px;width:160.4px;height:0.8px;background:#f0f0f0"></div>
<span class="t" style="font:normal bold 8.80px/11px 'Liberation Sans',sans-serif;color:#111;left:20.3px;top:88.5px;transform:scaleX(0.940);">SETUP</span>
<span class="t" style="font:normal normal 8.70px/11px 'Liberation Sans',sans-serif;color:#33339c;left:100.0px;top:88.5px;transform:scaleX(0.850);-webkit-text-stroke:.25px #33339c;">76</span>
<span class="t" style="font:normal normal 8.70px/11px 'Liberation Sans',sans-serif;color:#33339c;left:143.3px;top:88.5px;transform:scaleX(0.850);-webkit-text-stroke:.25px #33339c;">76</span>
<div style="left:16.6px;top:113.0px;width:160.4px;height:0.8px;background:#f0f0f0"></div>
<span class="t" style="font:normal bold 8.80px/11px 'Liberation Sans',sans-serif;color:#111;left:20.3px;top:101.3px;transform:scaleX(0.940);">DATA0/LPM</span>
<span class="t" style="font:normal normal 8.70px/11px 'Liberation Sans',sans-serif;color:#33339c;left:100.0px;top:101.3px;transform:scaleX(0.850);-webkit-text-stroke:.25px #33339c;">76</span>
<span class="t" style="font:normal normal 8.70px/11px 'Liberation Sans',sans-serif;color:#33339c;left:143.3px;top:101.3px;transform:scaleX(0.850);-webkit-text-stroke:.25px #33339c;">76</span>
<div style="left:16.6px;top:125.8px;width:160.4px;height:0.8px;background:#f0f0f0"></div>
<span class="t" style="font:normal bold 8.80px/11px 'Liberation Sans',sans-serif;color:#111;left:20.3px;top:114.1px;transform:scaleX(0.940);">DATA1</span>
<span class="t" style="font:normal normal 8.70px/11px 'Liberation Sans',sans-serif;color:#33339c;left:100.0px;top:114.1px;transform:scaleX(0.850);-webkit-text-stroke:.25px #33339c;">212</span>
<span class="t" style="font:normal normal 8.70px/11px 'Liberation Sans',sans-serif;color:#33339c;left:143.3px;top:114.1px;transform:scaleX(0.850);-webkit-text-stroke:.25px #33339c;">212</span>
<div style="left:16.6px;top:138.6px;width:160.4px;height:0.8px;background:#f0f0f0"></div>
<span class="t" style="font:normal bold 8.80px/11px 'Liberation Sans',sans-serif;color:#111;left:20.3px;top:126.9px;transform:scaleX(0.940);">DATA2</span>
<span class="t" style="font:normal normal 8.70px/11px 'Liberation Sans',sans-serif;color:#111;left:100.0px;top:126.9px;transform:scaleX(0.850);-webkit-text-stroke:.25px #111;">0</span>
<span class="t" style="font:normal normal 8.70px/11px 'Liberation Sans',sans-serif;color:#111;left:143.3px;top:126.9px;transform:scaleX(0.850);-webkit-text-stroke:.25px #111;">0</span>
<div style="left:16.6px;top:151.4px;width:160.4px;height:0.8px;background:#f0f0f0"></div>
<span class="t" style="font:normal bold 8.80px/11px 'Liberation Sans',sans-serif;color:#111;left:20.3px;top:139.7px;transform:scaleX(0.940);">MDATA</span>
<span class="t" style="font:normal normal 8.70px/11px 'Liberation Sans',sans-serif;color:#111;left:100.0px;top:139.7px;transform:scaleX(0.850);-webkit-text-stroke:.25px #111;">0</span>
<span class="t" style="font:normal normal 8.70px/11px 'Liberation Sans',sans-serif;color:#111;left:143.3px;top:139.7px;transform:scaleX(0.850);-webkit-text-stroke:.25px #111;">0</span>
<div style="left:16.6px;top:164.3px;width:160.4px;height:0.8px;background:#f0f0f0"></div>
<span class="t" style="font:normal bold 8.80px/11px 'Liberation Sans',sans-serif;color:#111;left:20.3px;top:152.6px;transform:scaleX(0.940);">ACK</span>
<span class="t" style="font:normal normal 8.70px/11px 'Liberation Sans',sans-serif;color:#33339c;left:100.0px;top:152.6px;transform:scaleX(0.850);-webkit-text-stroke:.25px #33339c;">292</span>
<span class="t" style="font:normal normal 8.70px/11px 'Liberation Sans',sans-serif;color:#33339c;left:143.3px;top:152.6px;transform:scaleX(0.850);-webkit-text-stroke:.25px #33339c;">292</span>
<div style="left:16.6px;top:177.1px;width:160.4px;height:0.8px;background:#f0f0f0"></div>
<span class="t" style="font:normal bold 8.80px/11px 'Liberation Sans',sans-serif;color:#111;left:20.3px;top:165.4px;transform:scaleX(0.940);">NAK</span>
<span class="t" style="font:normal normal 8.70px/11px 'Liberation Sans',sans-serif;color:#33339c;left:100.0px;top:165.4px;transform:scaleX(0.850);-webkit-text-stroke:.25px #33339c;">374</span>
<span class="t" style="font:normal normal 8.70px/11px 'Liberation Sans',sans-serif;color:#33339c;left:143.3px;top:165.4px;transform:scaleX(0.850);-webkit-text-stroke:.25px #33339c;">374</span>
<div style="left:16.6px;top:189.9px;width:160.4px;height:0.8px;background:#f0f0f0"></div>
<span class="t" style="font:normal bold 8.80px/11px 'Liberation Sans',sans-serif;color:#111;left:20.3px;top:178.2px;transform:scaleX(0.940);">STALL</span>
<span class="t" style="font:normal normal 8.70px/11px 'Liberation Sans',sans-serif;color:#111;left:100.0px;top:178.2px;transform:scaleX(0.850);-webkit-text-stroke:.25px #111;">0</span>
<span class="t" style="font:normal normal 8.70px/11px 'Liberation Sans',sans-serif;color:#111;left:143.3px;top:178.2px;transform:scaleX(0.850);-webkit-text-stroke:.25px #111;">0</span>
<div style="left:16.6px;top:202.7px;width:160.4px;height:0.8px;background:#f0f0f0"></div>
<span class="t" style="font:normal bold 8.80px/11px 'Liberation Sans',sans-serif;color:#111;left:20.3px;top:191.0px;transform:scaleX(0.940);">NYET</span>
<span class="t" style="font:normal normal 8.70px/11px 'Liberation Sans',sans-serif;color:#111;left:100.0px;top:191.0px;transform:scaleX(0.850);-webkit-text-stroke:.25px #111;">0</span>
<span class="t" style="font:normal normal 8.70px/11px 'Liberation Sans',sans-serif;color:#111;left:143.3px;top:191.0px;transform:scaleX(0.850);-webkit-text-stroke:.25px #111;">0</span>
<div style="left:16.6px;top:215.5px;width:160.4px;height:0.8px;background:#f0f0f0"></div>
<span class="t" style="font:normal bold 8.80px/11px 'Liberation Sans',sans-serif;color:#111;left:20.3px;top:203.8px;transform:scaleX(0.940);">PRE</span>
<span class="t" style="font:normal normal 8.70px/11px 'Liberation Sans',sans-serif;color:#111;left:100.0px;top:203.8px;transform:scaleX(0.850);-webkit-text-stroke:.25px #111;">0</span>
<span class="t" style="font:normal normal 8.70px/11px 'Liberation Sans',sans-serif;color:#111;left:143.3px;top:203.8px;transform:scaleX(0.850);-webkit-text-stroke:.25px #111;">0</span>
<div style="left:16.6px;top:228.4px;width:160.4px;height:0.8px;background:#f0f0f0"></div>
<span class="t" style="font:normal bold 8.80px/11px 'Liberation Sans',sans-serif;color:#111;left:20.3px;top:216.7px;transform:scaleX(0.940);">SPLIT</span>
<span class="t" style="font:normal normal 8.70px/11px 'Liberation Sans',sans-serif;color:#111;left:100.0px;top:216.7px;transform:scaleX(0.850);-webkit-text-stroke:.25px #111;">0</span>
<span class="t" style="font:normal normal 8.70px/11px 'Liberation Sans',sans-serif;color:#111;left:143.3px;top:216.7px;transform:scaleX(0.850);-webkit-text-stroke:.25px #111;">0</span>
<div style="left:16.6px;top:241.2px;width:160.4px;height:0.8px;background:#f0f0f0"></div>
<span class="t" style="font:normal bold 8.80px/11px 'Liberation Sans',sans-serif;color:#111;left:20.3px;top:229.5px;transform:scaleX(0.940);">PING</span>
<span class="t" style="font:normal normal 8.70px/11px 'Liberation Sans',sans-serif;color:#33339c;left:100.0px;top:229.5px;transform:scaleX(0.850);-webkit-text-stroke:.25px #33339c;">68</span>
<span class="t" style="font:normal normal 8.70px/11px 'Liberation Sans',sans-serif;color:#33339c;left:143.3px;top:229.5px;transform:scaleX(0.850);-webkit-text-stroke:.25px #33339c;">68</span>
<div style="left:16.6px;top:254.0px;width:160.4px;height:0.8px;background:#f0f0f0"></div>
<span class="t" style="font:normal bold 8.80px/11px 'Liberation Sans',sans-serif;color:#111;left:20.3px;top:242.3px;transform:scaleX(0.940);">EXT</span>
<div style="left:98.3px;top:241.8px;width:43.0px;height:12.2px;background:#fff;border:1px solid #3a6cc8"></div>
<span class="t" style="font:normal normal 8.70px/11px 'Liberation Sans',sans-serif;color:#33339c;left:100.0px;top:242.3px;transform:scaleX(0.850);-webkit-text-stroke:.25px #33339c;">4</span>
<span class="t" style="font:normal normal 8.70px/11px 'Liberation Sans',sans-serif;color:#33339c;left:143.3px;top:242.3px;transform:scaleX(0.850);-webkit-text-stroke:.25px #33339c;">4</span>
<div style="left:16.6px;top:266.8px;width:160.4px;height:0.8px;background:#f0f0f0"></div>
<span class="t" style="font:normal bold 8.80px/11px 'Liberation Sans',sans-serif;color:#111;left:20.3px;top:255.1px;transform:scaleX(0.940);">Reset</span>
<span class="t" style="font:normal normal 8.70px/11px 'Liberation Sans',sans-serif;color:#111;left:100.0px;top:255.1px;transform:scaleX(0.850);-webkit-text-stroke:.25px #111;">0</span>
<span class="t" style="font:normal normal 8.70px/11px 'Liberation Sans',sans-serif;color:#111;left:143.3px;top:255.1px;transform:scaleX(0.850);-webkit-text-stroke:.25px #111;">0</span>
<div style="left:16.6px;top:279.6px;width:160.4px;height:0.8px;background:#f0f0f0"></div>
<span class="t" style="font:normal bold 8.80px/11px 'Liberation Sans',sans-serif;color:#111;left:20.3px;top:267.9px;transform:scaleX(0.940);">Suspend</span>
<span class="t" style="font:normal normal 8.70px/11px 'Liberation Sans',sans-serif;color:#111;left:100.0px;top:267.9px;transform:scaleX(0.850);-webkit-text-stroke:.25px #111;">0</span>
<span class="t" style="font:normal normal 8.70px/11px 'Liberation Sans',sans-serif;color:#111;left:143.3px;top:267.9px;transform:scaleX(0.850);-webkit-text-stroke:.25px #111;">0</span>
<div style="left:16.6px;top:292.5px;width:160.4px;height:0.8px;background:#f0f0f0"></div>
<span class="t" style="font:normal bold 8.80px/11px 'Liberation Sans',sans-serif;color:#111;left:20.3px;top:280.8px;transform:scaleX(0.940);">Resume</span>
<span class="t" style="font:normal normal 8.70px/11px 'Liberation Sans',sans-serif;color:#111;left:100.0px;top:280.8px;transform:scaleX(0.850);-webkit-text-stroke:.25px #111;">0</span>
<span class="t" style="font:normal normal 8.70px/11px 'Liberation Sans',sans-serif;color:#111;left:143.3px;top:280.8px;transform:scaleX(0.850);-webkit-text-stroke:.25px #111;">0</span>
<div style="left:16.6px;top:305.3px;width:160.4px;height:0.8px;background:#f0f0f0"></div>
<span class="t" style="font:normal bold 8.80px/11px 'Liberation Sans',sans-serif;color:#111;left:20.3px;top:293.6px;transform:scaleX(0.940);">Keep alive</span>
<span class="t" style="font:normal normal 8.70px/11px 'Liberation Sans',sans-serif;color:#111;left:100.0px;top:293.6px;transform:scaleX(0.850);-webkit-text-stroke:.25px #111;">0</span>
<span class="t" style="font:normal normal 8.70px/11px 'Liberation Sans',sans-serif;color:#111;left:143.3px;top:293.6px;transform:scaleX(0.850);-webkit-text-stroke:.25px #111;">0</span>
<div style="left:16.6px;top:318.1px;width:160.4px;height:0.8px;background:#f0f0f0"></div>
<span class="t" style="font:normal bold 8.80px/11px 'Liberation Sans',sans-serif;color:#111;left:20.3px;top:306.4px;transform:scaleX(0.940);">Chirp</span>
<span class="t" style="font:normal normal 8.70px/11px 'Liberation Sans',sans-serif;color:#33339c;left:100.0px;top:306.4px;transform:scaleX(0.850);-webkit-text-stroke:.25px #33339c;">4</span>
<span class="t" style="font:normal normal 8.70px/11px 'Liberation Sans',sans-serif;color:#33339c;left:143.3px;top:306.4px;transform:scaleX(0.850);-webkit-text-stroke:.25px #33339c;">4</span>
<div style="left:177.0px;top:32.2px;width:9.0px;height:283.5px;background:#f0f0f0;border-left:1px solid #e0e0e0"></div>
<span class="t" style="font:normal normal 6.00px/8px 'Liberation Sans',sans-serif;color:#444;left:179.4px;top:36.2px;font-family:'DejaVu Sans',sans-serif;">▴</span>
<span class="t" style="font:normal normal 6.00px/8px 'Liberation Sans',sans-serif;color:#444;left:179.4px;top:305.7px;font-family:'DejaVu Sans',sans-serif;">▾</span>
<div style="left:178.2px;top:46.7px;width:7.2px;height:223.0px;background:linear-gradient(90deg,#f6f6f6,#dcdcdc);border:1px solid #a8a8a8;border-radius:2px"></div>
<span class="t" style="font:normal normal 6.00px/8px 'Liberation Sans',sans-serif;color:#666;left:180.0px;top:152.7px;font-family:'DejaVu Sans',sans-serif;">≡</span>
</div>
<div style="left:583.2px;top:474.0px;width:366.0px;height:87.5px;background:#fdfde0;border:1px solid #555;box-shadow:4px 4px 5px rgba(0,0,0,.65);overflow:hidden">
<span class="t" style="font:normal normal 11.20px/15px 'Liberation Mono',monospace;color:#2a2a2a;left:0.8px;top:0.1px;">SCSI command     : SECURITY PROTOCOL IN</span>
<span class="t" style="font:normal normal 11.20px/15px 'Liberation Mono',monospace;color:#2a2a2a;left:0.8px;top:12.2px;">SCSI CDB opcode  : 0xA2</span>
<span class="t" style="font:normal normal 11.20px/15px 'Liberation Mono',monospace;color:#2a2a2a;left:0.8px;top:24.2px;">SCSI Command Set : SPC-4</span>
<span class="t" style="font:normal normal 11.20px/15px 'Liberation Mono',monospace;color:#2a2a2a;left:0.8px;top:48.4px;">The SECURITY PROTOCOL IN command is used to</span>
<span class="t" style="font:normal normal 11.20px/15px 'Liberation Mono',monospace;color:#2a2a2a;left:0.8px;top:60.5px;">retrieve security protocol information or the results</span>
<span class="t" style="font:normal normal 11.20px/15px 'Liberation Mono',monospace;color:#2a2a2a;left:0.8px;top:72.5px;">of one or more SECURITY PROTOCOL OUT commands.</span>
</div>
<span class="t" style="font:italic normal 14.30px/20px 'Liberation Sans',sans-serif;color:#646567;left:27.7px;top:84.0px;">Performance monitor shows</span>
<span class="t" style="font:italic normal 14.30px/20px 'Liberation Sans',sans-serif;color:#646567;left:27.7px;top:101.0px;transform:scaleX(0.990);">throughput in real-time</span>
<span class="t" style="font:italic normal 14.30px/20px 'Liberation Sans',sans-serif;color:#646567;left:574.1px;top:33.0px;transform:scaleX(0.987);">Bus Utilization graphs track throughput in real time</span>
<span class="t" style="font:italic normal 14.30px/20px 'Liberation Sans',sans-serif;color:#646567;left:975.7px;top:407.0px;transform:scaleX(0.990);">Zero-Time Search</span>
<span class="t" style="font:normal normal 9.00px/12px 'Liberation Sans',sans-serif;color:#646567;left:1089.0px;top:407.5px;">™</span>
<span class="t" style="font:italic normal 14.30px/20px 'Liberation Sans',sans-serif;color:#646567;left:982.4px;top:424.0px;transform:scaleX(0.990);">only shows events</span>
<span class="t" style="font:italic normal 14.30px/20px 'Liberation Sans',sans-serif;color:#646567;left:962.5px;top:442.0px;transform:scaleX(0.986);">that occur in the trace</span>
<span class="t" style="font:italic normal 14.30px/20px 'Liberation Sans',sans-serif;color:#646567;left:792.8px;top:601.0px;transform:scaleX(0.989);">Tooltips provide explanations of</span>
<span class="t" style="font:italic normal 14.30px/20px 'Liberation Sans',sans-serif;color:#646567;left:792.8px;top:619.0px;transform:scaleX(0.990);">protocol layer events</span>
<span class="t" style="font:italic normal 14.30px/20px 'Liberation Sans',sans-serif;color:#646567;left:50.3px;top:569.0px;transform:scaleX(0.990);">Traffic summaries</span>
<span class="t" style="font:italic normal 14.30px/20px 'Liberation Sans',sans-serif;color:#646567;left:50.3px;top:587.0px;transform:scaleX(0.990);">provide detailed</span>
<span class="t" style="font:italic normal 14.30px/20px 'Liberation Sans',sans-serif;color:#646567;left:50.3px;top:604.0px;transform:scaleX(0.990);">metrics for events</span>
<span class="t" style="font:italic normal 14.30px/20px 'Liberation Sans',sans-serif;color:#646567;left:50.3px;top:621.0px;transform:scaleX(0.990);">within a trace</span>
<svg style="left:0;top:0" width="1140" height="693" viewBox="0 0 1140 693"><g fill="none" stroke="#0d72b9" stroke-width="2.2"><path d="M18.0 124.1L318.0 124.1"/><path d="M567.5 26.4L567.5 112.0"/><path d="M973 313.9H1111.2V470.5"/><path d="M785.3 507.0L785.3 640.2"/><path d="M253 327H40V639"/><path d="M40.0 477.0L341.0 477.0"/></g><g fill="#0d72b9"><circle cx="318.2" cy="124.1" r="6.6"/><circle cx="567.5" cy="111.7" r="6.6"/><circle cx="973.2" cy="313.9" r="6.6"/><circle cx="785.3" cy="507.1" r="6.6"/><circle cx="253.0" cy="327.0" r="6.6"/><circle cx="341.1" cy="477.0" r="6.6"/></g></svg>
</div>
</body></html>
